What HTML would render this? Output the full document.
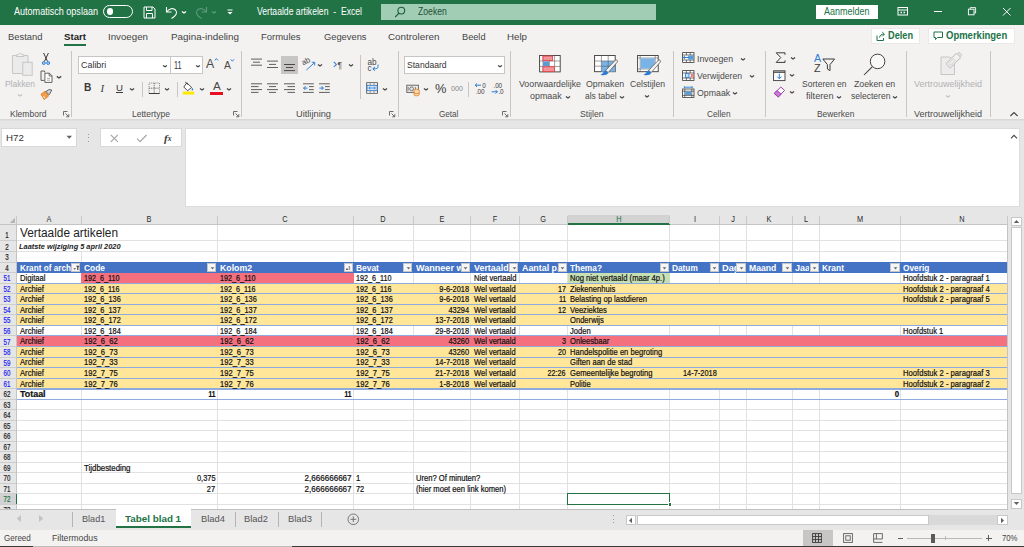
<!DOCTYPE html>
<html lang="nl"><head><meta charset="utf-8"><title>Vertaalde artikelen - Excel</title>
<style>
html,body{margin:0;padding:0;}
body{width:1024px;height:547px;overflow:hidden;background:#e6e6e6;position:relative;font-family:"Liberation Sans", sans-serif;}
.t{position:absolute;white-space:pre;display:block;}
.r{position:absolute;display:block;}
</style></head><body>
<div class="r" style="left:0.00px;top:0.00px;width:1024.00px;height:24.50px;background:#217346;"></div>
<div class="r" style="left:0.00px;top:24.50px;width:1024.00px;height:94.30px;background:#f3f2f1;"></div>
<div class="r" style="left:0.00px;top:118.80px;width:1024.00px;height:2.60px;background:linear-gradient(#d4d4d4,#e4e4e4);"></div>
<span class="t" style="top:4.50px;line-height:14px;font-size:10.2px;color:#fff;left:14.00px;transform:scaleX(0.8882);transform-origin:left center;">Automatisch opslaan</span>
<div class="r" style="left:103.00px;top:5.00px;width:29.50px;height:13.00px;border:1px solid #fff;border-radius:7px;box-sizing:border-box;"></div>
<div class="r" style="left:106.60px;top:8.30px;width:6.60px;height:6.60px;background:#fff;border-radius:3.3px;"></div>
<svg class="r" style="left:143.00px;top:6.00px;" width="13" height="13" viewBox="0 0 13 13"><path d="M1 1 H10 L12 3 V12 H1 Z" fill="none" stroke="#fff" stroke-width="1"/><path d="M3.5 1 V4.5 H9 V1 M3.5 12 V7.5 H9.5 V12" fill="none" stroke="#fff" stroke-width="1"/></svg>
<svg class="r" style="left:165.00px;top:5.00px;" width="14" height="15" viewBox="0 0 14 15"><path d="M1.5 2 V7 H6.5" fill="none" stroke="#fff" stroke-width="1.1"/><path d="M1.8 6.8 C4 3.5 8 2.5 10.5 5 C13 7.8 11 11 6.5 13.5" fill="none" stroke="#fff" stroke-width="1.1"/></svg>
<svg class="r" style="left:180.00px;top:7.50px;" width="8" height="8" viewBox="0 0 8 8"><path d="M1.92 3.40 L4 4.90 L6.08 3.40" fill="none" stroke="#fff" stroke-width="1.2"/></svg>
<svg class="r" style="left:194.00px;top:5.00px;" width="14" height="15" viewBox="0 0 14 15"><path d="M12.5 2 V7 H7.5" fill="none" stroke="#5f9a7c" stroke-width="1.1"/><path d="M12.2 6.8 C10 3.5 6 2.5 3.5 5 C1 7.8 3 11 7.5 13.5" fill="none" stroke="#5f9a7c" stroke-width="1.1"/></svg>
<svg class="r" style="left:210.00px;top:7.50px;" width="8" height="8" viewBox="0 0 8 8"><path d="M1.92 3.40 L4 4.90 L6.08 3.40" fill="none" stroke="#5f9a7c" stroke-width="1.2"/></svg>
<svg class="r" style="left:226.00px;top:8.00px;" width="8" height="8" viewBox="0 0 8 8"><path d="M1.5 2 H6.5" stroke="#fff" stroke-width="1"/><path d="M1.5 4 L4 6.5 L6.5 4 Z" fill="#fff"/></svg>
<span class="t" style="top:4.50px;line-height:14px;font-size:10.2px;color:#fff;left:256.70px;transform:scaleX(0.8467);transform-origin:left center;">Vertaalde artikelen  -  Excel</span>
<div class="r" style="left:380.50px;top:4.00px;width:275.00px;height:16.00px;background:#a0cdb4;"></div>
<svg class="r" style="left:394.00px;top:6.00px;" width="13" height="13" viewBox="0 0 13 13"><circle cx="7.3" cy="4.6" r="3.4" fill="none" stroke="#1e5c3a" stroke-width="1.1"/><path d="M5 7.1 L1.2 11" stroke="#1e5c3a" stroke-width="1.1"/></svg>
<span class="t" style="top:4.80px;line-height:14px;font-size:10.2px;color:#1e4d33;left:417.50px;transform:scaleX(0.8474);transform-origin:left center;">Zoeken</span>
<div class="r" style="left:816.00px;top:4.50px;width:62.00px;height:14.00px;background:#fff;"></div>
<span class="t" style="top:4.60px;line-height:14px;font-size:10.2px;color:#217346;left:824.00px;transform:scaleX(0.8827);transform-origin:left center;">Aanmelden</span>
<svg class="r" style="left:897.00px;top:6.00px;" width="12" height="11" viewBox="0 0 12 11"><rect x="1" y="1.5" width="9.5" height="7.5" fill="none" stroke="#fff" stroke-width="1"/><path d="M1 4 H10.5" stroke="#fff" stroke-width="1"/><path d="M3.5 6.5 H5 M6.5 6.5 H8" stroke="#fff" stroke-width="1.6"/></svg>
<div class="r" style="left:933.50px;top:11.00px;width:8.00px;height:1.00px;background:#fff;"></div>
<svg class="r" style="left:967.00px;top:6.40px;" width="11" height="11" viewBox="0 0 11 11"><rect x="1.4" y="3.2" width="5.6" height="5.6" fill="none" stroke="#fff" stroke-width="0.9"/><path d="M3.2 3.2 V1.6 H8.6 V7 H7" fill="none" stroke="#fff" stroke-width="0.9"/></svg>
<svg class="r" style="left:1002.00px;top:7.00px;" width="10" height="10" viewBox="0 0 10 10"><path d="M1 1 L8.5 8.5 M8.5 1 L1 8.5" stroke="#fff" stroke-width="1"/></svg>
<span class="t" style="top:29.80px;line-height:14px;font-size:9.7px;color:#444;left:7.50px;transform:scaleX(0.9701);transform-origin:left center;">Bestand</span>
<span class="t" style="top:29.80px;line-height:14px;font-size:9.7px;color:#222;font-weight:700;left:64.00px;transform:scaleX(0.9965);transform-origin:left center;">Start</span>
<span class="t" style="top:29.80px;line-height:14px;font-size:9.7px;color:#444;left:107.50px;transform:scaleX(1.0031);transform-origin:left center;">Invoegen</span>
<span class="t" style="top:29.80px;line-height:14px;font-size:9.7px;color:#444;left:170.50px;transform:scaleX(1.018);transform-origin:left center;">Pagina-indeling</span>
<span class="t" style="top:29.80px;line-height:14px;font-size:9.7px;color:#444;left:261.00px;transform:scaleX(0.9783);transform-origin:left center;">Formules</span>
<span class="t" style="top:29.80px;line-height:14px;font-size:9.7px;color:#444;left:323.50px;transform:scaleX(0.9622);transform-origin:left center;">Gegevens</span>
<span class="t" style="top:29.80px;line-height:14px;font-size:9.7px;color:#444;left:388.00px;transform:scaleX(1.0173);transform-origin:left center;">Controleren</span>
<span class="t" style="top:29.80px;line-height:14px;font-size:9.7px;color:#444;left:461.50px;transform:scaleX(0.9483);transform-origin:left center;">Beeld</span>
<span class="t" style="top:29.80px;line-height:14px;font-size:9.7px;color:#444;left:507.00px;transform:scaleX(1.0031);transform-origin:left center;">Help</span>
<div class="r" style="left:64.00px;top:43.80px;width:22.00px;height:1.80px;background:#217346;"></div>
<div class="r" style="left:870.50px;top:28.00px;width:49.50px;height:16.00px;background:#fff;border:1px solid #ebe9e7;box-sizing:border-box;"></div>
<div class="r" style="left:927.50px;top:28.00px;width:87.00px;height:16.00px;background:#fff;border:1px solid #ebe9e7;box-sizing:border-box;"></div>
<span class="t" style="top:29.00px;line-height:14px;font-size:10px;color:#217346;font-weight:700;left:888.20px;transform:scaleX(0.918);transform-origin:left center;">Delen</span>
<span class="t" style="top:29.00px;line-height:14px;font-size:10px;color:#217346;font-weight:700;left:945.50px;transform:scaleX(0.9493);transform-origin:left center;">Opmerkingen</span>
<svg class="r" style="left:876.00px;top:30.50px;" width="10" height="11" viewBox="0 0 10 11"><path d="M1 4.5 V9.5 H7.5 V7" fill="none" stroke="#217346" stroke-width="1"/><path d="M3.5 6.5 C4 4 5.5 3.2 8 3.2 M6.2 1 L8.4 3.2 L6.2 5.4" fill="none" stroke="#217346" stroke-width="1"/></svg>
<svg class="r" style="left:933.00px;top:31.00px;" width="11" height="10" viewBox="0 0 11 10"><path d="M1 1 H9.5 V6.5 H4.5 L2.5 8.5 V6.5 H1 Z" fill="none" stroke="#217346" stroke-width="1"/></svg>
<svg class="r" style="left:11.00px;top:52.00px;" width="23" height="25" viewBox="0 0 23 25"><path d="M1.5 3.5 H17 V21.5 H1.5 Z" fill="#ebebeb" stroke="#c6c6c6" stroke-width="1"/><path d="M5.5 4.5 V2.8 H7.6 C7.8 0.6 10.8 0.6 11 2.8 H13 V4.5 Z" fill="#f3f2f1" stroke="#c6c6c6" stroke-width="1"/><rect x="11.8" y="10.3" width="9.4" height="13" fill="#ebebeb" stroke="#c6c6c6" stroke-width="1"/></svg>
<span class="t" style="top:77.20px;line-height:14px;font-size:9.4px;color:#b1b1b1;left:5.00px;transform:scaleX(0.8993);transform-origin:left center;">Plakken</span>
<svg class="r" style="left:15.80px;top:91.40px;" width="8" height="8" viewBox="0 0 8 8"><path d="M1.92 3.40 L4 4.90 L6.08 3.40" fill="none" stroke="#c2c2c2" stroke-width="1.2"/></svg>
<svg class="r" style="left:41.00px;top:52.00px;" width="10" height="14" viewBox="0 0 10 14"><path d="M2.6 1 L6.6 9.6 M7.4 1 L3.4 9.6" stroke="#3b3a39" stroke-width="1" fill="none"/><circle cx="2.8" cy="11" r="1.5" fill="#9cc8f0" stroke="#2b7cd3" stroke-width="0.9"/><circle cx="7.2" cy="11" r="1.5" fill="#9cc8f0" stroke="#2b7cd3" stroke-width="0.9"/></svg>
<svg class="r" style="left:39.50px;top:70.00px;" width="14" height="14" viewBox="0 0 14 14"><path d="M4.6 2.4 V1 H1 V10.4 H4.4" fill="none" stroke="#4a4846" stroke-width="0.85"/><path d="M4.9 3.2 H9.4 L12 5.8 V12.4 H4.9 Z" fill="#fff" stroke="#4a4846" stroke-width="0.85"/><path d="M9.2 3.2 V6 H12" fill="none" stroke="#4a4846" stroke-width="0.8"/><path d="M7 8.4 H10 M7 10.2 H10" stroke="#8a8886" stroke-width="0.7"/></svg>
<svg class="r" style="left:55.00px;top:72.90px;" width="8" height="8" viewBox="0 0 8 8"><path d="M1.79 3.36 L4 4.94 L6.21 3.36" fill="none" stroke="#444" stroke-width="1.32"/></svg>
<svg class="r" style="left:39.50px;top:88.00px;" width="14" height="13" viewBox="0 0 14 13"><path d="M1 6.2 L5.2 3.2 L8.6 8 L4.2 11.6 Z" fill="#f0a04b" stroke="#e07b25" stroke-width="0.9"/><path d="M3 8.5 L5.2 10.2" stroke="#fff" stroke-width="0.9"/><path d="M6 3.6 L8.8 1.6 L11.8 2 L9.2 6.8 Z" fill="#d8d8d8" stroke="#555" stroke-width="0.9"/></svg>
<span class="t" style="top:106.50px;line-height:14px;font-size:9.3px;color:#4a4a4a;left:9.90px;transform:scaleX(0.9172);transform-origin:left center;">Klembord</span>
<svg class="r" style="left:63.00px;top:110.70px;" width="7" height="7" viewBox="0 0 7 7"><path d="M0.5 4.5 V0.5 H4.5" fill="none" stroke="#605e5c" stroke-width="0.9"/><path d="M2.5 2.5 L5.6 5.6 M5.8 3.2 V5.8 H3.2" fill="none" stroke="#605e5c" stroke-width="0.9"/></svg>
<div class="r" style="left:71.30px;top:50.50px;width:1.00px;height:66.00px;background:#c8c6c4;"></div>
<div class="r" style="left:78.30px;top:56.00px;width:92.50px;height:17.70px;background:#fff;border:1px solid #c8c6c4;box-sizing:border-box;"></div>
<div class="r" style="left:170.20px;top:56.00px;width:32.50px;height:17.70px;background:#fff;border:1px solid #c8c6c4;box-sizing:border-box;"></div>
<span class="t" style="top:58.20px;line-height:14px;font-size:9.9px;color:#333;left:80.70px;transform:scaleX(0.9036);transform-origin:left center;">Calibri</span>
<svg class="r" style="left:161.30px;top:61.60px;" width="8" height="8" viewBox="0 0 8 8"><path d="M2.05 3.44 L4 4.86 L5.95 3.44" fill="none" stroke="#444" stroke-width="1.2"/></svg>
<span class="t" style="top:58.00px;line-height:14px;font-size:10.6px;color:#333;left:173.60px;transform:scaleX(0.6909);transform-origin:left center;">11</span>
<svg class="r" style="left:193.80px;top:61.60px;" width="8" height="8" viewBox="0 0 8 8"><path d="M2.05 3.44 L4 4.86 L5.95 3.44" fill="none" stroke="#444" stroke-width="1.2"/></svg>
<span class="t" style="top:56.80px;line-height:14px;font-size:12.6px;color:#4a4846;left:206.20px;transform:scaleX(0.9755);transform-origin:left center;">A</span>
<svg class="r" style="left:213.90px;top:57.40px;" width="6" height="5" viewBox="0 0 6 5"><path d="M0.8 3.4 L2.4 1.6 L4 3.4" fill="none" stroke="#2b7cd3" stroke-width="1"/></svg>
<span class="t" style="top:57.60px;line-height:14px;font-size:10.8px;color:#4a4846;left:223.80px;transform:scaleX(0.9579);transform-origin:left center;">A</span>
<svg class="r" style="left:229.80px;top:58.00px;" width="6" height="5" viewBox="0 0 6 5"><path d="M0.8 1.4 L2.4 3.2 L4 1.4" fill="none" stroke="#2b7cd3" stroke-width="1"/></svg>
<span class="t" style="top:81.00px;line-height:14px;font-size:10.2px;color:#3b3a39;font-weight:700;left:83.90px;">B</span>
<span class="t" style="top:80.60px;line-height:14px;font-size:10.8px;color:#3b3a39;font-style:italic;left:100.40px;font-family:'Liberation Serif',serif;">I</span>
<span class="t" style="top:81.00px;line-height:14px;font-size:9.6px;color:#3b3a39;left:115.90px;">U</span>
<div class="r" style="left:115.90px;top:92.40px;width:6.80px;height:0.90px;background:#3b3a39;"></div>
<svg class="r" style="left:128.40px;top:84.80px;" width="8" height="8" viewBox="0 0 8 8"><path d="M1.92 3.40 L4 4.90 L6.08 3.40" fill="none" stroke="#444" stroke-width="1.2"/></svg>
<div class="r" style="left:142.00px;top:81.50px;width:1.00px;height:15.00px;background:#c8c6c4;"></div>
<svg class="r" style="left:147.50px;top:82.00px;" width="13" height="13" viewBox="0 0 13 13"><rect x="1" y="1" width="10.5" height="10.5" fill="none" stroke="#8a8886" stroke-width="0.9" stroke-dasharray="1.2 0.9"/><path d="M6.2 1 V11.5 M1 6.2 H11.5" stroke="#605e5c" stroke-width="0.9" stroke-dasharray="1.2 0.9"/><path d="M1 11.5 H11.5" stroke="#3b3a39" stroke-width="1"/></svg>
<svg class="r" style="left:163.20px;top:84.80px;" width="8" height="8" viewBox="0 0 8 8"><path d="M1.92 3.40 L4 4.90 L6.08 3.40" fill="none" stroke="#444" stroke-width="1.2"/></svg>
<div class="r" style="left:176.80px;top:81.50px;width:1.00px;height:15.00px;background:#c8c6c4;"></div>
<svg class="r" style="left:181.90px;top:81.30px;" width="13" height="14" viewBox="0 0 13 14"><path d="M4.8 1.8 L9.6 6.4 L5.6 9.8 L1.8 6 Z" fill="#fff" stroke="#3b3a39" stroke-width="0.9"/><path d="M3.2 1 L6 3.6" stroke="#3b3a39" stroke-width="0.9"/><path d="M10.2 6.8 C11.4 8.4 11.4 9.4 10.4 9.6 C9.4 9.4 9.4 8.4 10.2 6.8 Z" fill="#2b7cd3"/><rect x="0.8" y="10.6" width="11.4" height="3" fill="#ffe900"/></svg>
<svg class="r" style="left:197.60px;top:84.80px;" width="8" height="8" viewBox="0 0 8 8"><path d="M1.92 3.40 L4 4.90 L6.08 3.40" fill="none" stroke="#444" stroke-width="1.2"/></svg>
<span class="t" style="top:78.90px;line-height:14px;font-size:11.2px;color:#4a4846;left:212.60px;transform:scaleX(1.0444);transform-origin:left center;">A</span>
<div class="r" style="left:210.30px;top:91.60px;width:12.50px;height:3.00px;background:#e81123;"></div>
<svg class="r" style="left:225.30px;top:84.80px;" width="8" height="8" viewBox="0 0 8 8"><path d="M1.92 3.40 L4 4.90 L6.08 3.40" fill="none" stroke="#444" stroke-width="1.2"/></svg>
<span class="t" style="top:106.50px;line-height:14px;font-size:9.3px;color:#4a4a4a;left:132.00px;transform:scaleX(0.9188);transform-origin:left center;">Lettertype</span>
<svg class="r" style="left:233.00px;top:110.70px;" width="7" height="7" viewBox="0 0 7 7"><path d="M0.5 4.5 V0.5 H4.5" fill="none" stroke="#605e5c" stroke-width="0.9"/><path d="M2.5 2.5 L5.6 5.6 M5.8 3.2 V5.8 H3.2" fill="none" stroke="#605e5c" stroke-width="0.9"/></svg>
<div class="r" style="left:241.00px;top:50.50px;width:1.00px;height:66.00px;background:#c8c6c4;"></div>
<svg class="r" style="left:250.90px;top:56.00px;" width="11" height="16" viewBox="0 0 11 16"><path d="M0 3.1 H11" stroke="#605e5c" stroke-width="1"/><path d="M2 6.2 H9" stroke="#605e5c" stroke-width="1"/><path d="M0 9.2 H11" stroke="#605e5c" stroke-width="1"/></svg>
<svg class="r" style="left:267.20px;top:56.00px;" width="11" height="16" viewBox="0 0 11 16"><path d="M0 5.1 H11" stroke="#605e5c" stroke-width="1"/><path d="M2 8.4 H9" stroke="#605e5c" stroke-width="1"/><path d="M0 11.5 H11" stroke="#605e5c" stroke-width="1"/></svg>
<div class="r" style="left:281.00px;top:56.40px;width:16.60px;height:17.20px;background:#c8c6c4;"></div>
<svg class="r" style="left:283.90px;top:56.00px;" width="11" height="16" viewBox="0 0 11 16"><path d="M0 8.5 H11" stroke="#4a4846" stroke-width="1"/><path d="M2 11.5 H9" stroke="#4a4846" stroke-width="1"/><path d="M0 14.6 H11" stroke="#4a4846" stroke-width="1"/></svg>
<svg class="r" style="left:301.50px;top:57.50px;" width="14" height="14" viewBox="0 0 14 14"><text x="0" y="0" font-family="Liberation Sans, sans-serif" font-size="7.8" fill="#4a4846" transform="translate(1.2 7.6) rotate(-28)">ab</text><path d="M4.4 12 L12.6 4.6 M9.8 4.2 L12.8 4.4 L12.6 7.4" fill="none" stroke="#2b7cd3" stroke-width="0.95"/></svg>
<svg class="r" style="left:315.90px;top:61.10px;" width="8" height="8" viewBox="0 0 8 8"><path d="M1.92 3.40 L4 4.90 L6.08 3.40" fill="none" stroke="#444" stroke-width="1.2"/></svg>
<svg class="r" style="left:332.50px;top:60.00px;" width="6" height="9" viewBox="0 0 6 9"><path d="M0.8 1.8 L3.4 4.4 L0.8 7" fill="none" stroke="#2b7cd3" stroke-width="1.05"/></svg>
<span class="t" style="top:57.60px;line-height:14px;font-size:8.4px;color:#4a4846;left:337.40px;">¶</span>
<svg class="r" style="left:346.60px;top:61.10px;" width="8" height="8" viewBox="0 0 8 8"><path d="M1.92 3.40 L4 4.90 L6.08 3.40" fill="none" stroke="#444" stroke-width="1.2"/></svg>
<div class="r" style="left:360.00px;top:54.60px;width:1.00px;height:44.20px;background:#c8c6c4;"></div>
<svg class="r" style="left:367.00px;top:57.50px;" width="13" height="14" viewBox="0 0 13 14"><text x="0.5" y="7.2" font-family="Liberation Sans, sans-serif" font-size="8.2" fill="#4a4846">ab</text><text x="0.5" y="12.8" font-family="Liberation Sans, sans-serif" font-size="8.2" fill="#4a4846">c</text><path d="M11 6.6 V8.6 C11 10.6 9.6 10.8 6 10.8 M8 8.8 L5.8 10.8 L8 12.8" fill="none" stroke="#2b7cd3" stroke-width="1"/></svg>
<svg class="r" style="left:250.90px;top:81.00px;" width="11" height="14" viewBox="0 0 11 14"><path d="M0 2.8 H11" stroke="#605e5c" stroke-width="1"/><path d="M0 5.6 H7.5" stroke="#605e5c" stroke-width="1"/><path d="M0 8.6 H11" stroke="#605e5c" stroke-width="1"/><path d="M0 11.4 H7.5" stroke="#605e5c" stroke-width="1"/></svg>
<svg class="r" style="left:267.20px;top:81.00px;" width="11" height="14" viewBox="0 0 11 14"><path d="M0 2.8 H11" stroke="#605e5c" stroke-width="1"/><path d="M2 5.6 H9" stroke="#605e5c" stroke-width="1"/><path d="M0 8.6 H11" stroke="#605e5c" stroke-width="1"/><path d="M2 11.4 H9" stroke="#605e5c" stroke-width="1"/></svg>
<svg class="r" style="left:283.90px;top:81.00px;" width="11" height="14" viewBox="0 0 11 14"><path d="M0 2.8 H11" stroke="#605e5c" stroke-width="1"/><path d="M3.5 5.6 H11" stroke="#605e5c" stroke-width="1"/><path d="M0 8.6 H11" stroke="#605e5c" stroke-width="1"/><path d="M3.5 11.4 H11" stroke="#605e5c" stroke-width="1"/></svg>
<svg class="r" style="left:303.10px;top:81.00px;" width="11" height="14" viewBox="0 0 11 14"><path d="M0 2.8 H10.8" stroke="#605e5c" stroke-width="1"/><path d="M6 5.6 H10.8" stroke="#605e5c" stroke-width="1"/><path d="M6 8.6 H10.8" stroke="#605e5c" stroke-width="1"/><path d="M0 11.4 H10.8" stroke="#605e5c" stroke-width="1"/><path d="M0.6 7.1 H4.6 M2.4 5.2 L0.6 7.1 L2.4 9" fill="none" stroke="#2b7cd3" stroke-width="1"/></svg>
<svg class="r" style="left:319.40px;top:81.00px;" width="11" height="14" viewBox="0 0 11 14"><path d="M0 2.8 H10.8" stroke="#605e5c" stroke-width="1"/><path d="M6 5.6 H10.8" stroke="#605e5c" stroke-width="1"/><path d="M6 8.6 H10.8" stroke="#605e5c" stroke-width="1"/><path d="M0 11.4 H10.8" stroke="#605e5c" stroke-width="1"/><path d="M0.4 7.1 H4.4 M2.6 5.2 L4.4 7.1 L2.6 9" fill="none" stroke="#2b7cd3" stroke-width="1"/></svg>
<svg class="r" style="left:366.00px;top:82.00px;" width="13" height="13" viewBox="0 0 13 13"><rect x="0.7" y="0.7" width="10.8" height="10.6" fill="#fff" stroke="#4a4846" stroke-width="0.8"/><path d="M0.7 3.2 H11.5 M0.7 8.8 H11.5 M4.2 0.7 V3.2 M8 0.7 V3.2 M4.2 8.8 V11.3 M8 8.8 V11.3" stroke="#605e5c" stroke-width="0.6"/><rect x="1.1" y="3.5" width="10" height="5" fill="#d6e8f8" stroke="#2b7cd3" stroke-width="0.7"/><path d="M2.8 6 H9.4 M4.2 4.7 L2.8 6 L4.2 7.3 M8 4.7 L9.4 6 L8 7.3" fill="none" stroke="#2b7cd3" stroke-width="0.8"/></svg>
<svg class="r" style="left:381.20px;top:85.00px;" width="8" height="8" viewBox="0 0 8 8"><path d="M1.92 3.40 L4 4.90 L6.08 3.40" fill="none" stroke="#444" stroke-width="1.2"/></svg>
<span class="t" style="top:106.50px;line-height:14px;font-size:9.3px;color:#4a4a4a;left:296.00px;transform:scaleX(0.996);transform-origin:left center;">Uitlijning</span>
<svg class="r" style="left:388.80px;top:110.70px;" width="7" height="7" viewBox="0 0 7 7"><path d="M0.5 4.5 V0.5 H4.5" fill="none" stroke="#605e5c" stroke-width="0.9"/><path d="M2.5 2.5 L5.6 5.6 M5.8 3.2 V5.8 H3.2" fill="none" stroke="#605e5c" stroke-width="0.9"/></svg>
<div class="r" style="left:397.50px;top:50.50px;width:1.00px;height:66.00px;background:#c8c6c4;"></div>
<div class="r" style="left:404.40px;top:56.20px;width:100.40px;height:17.50px;background:#fff;border:1px solid #c8c6c4;box-sizing:border-box;"></div>
<span class="t" style="top:58.20px;line-height:14px;font-size:9.9px;color:#333;left:406.90px;transform:scaleX(0.8688);transform-origin:left center;">Standaard</span>
<svg class="r" style="left:495.80px;top:61.60px;" width="8" height="8" viewBox="0 0 8 8"><path d="M2.05 3.44 L4 4.86 L5.95 3.44" fill="none" stroke="#444" stroke-width="1.2"/></svg>
<svg class="r" style="left:405.90px;top:83.90px;" width="15" height="13" viewBox="0 0 15 13"><rect x="0.8" y="1.2" width="11.6" height="7.2" fill="#e8e8e8" stroke="#605e5c" stroke-width="0.9"/><circle cx="5.6" cy="4.8" r="1.9" fill="none" stroke="#605e5c" stroke-width="0.8"/><path d="M2.2 3 V6.6 M9.4 3 V6.6" stroke="#605e5c" stroke-width="0.7"/><ellipse cx="10.6" cy="6.4" rx="2.6" ry="1.1" fill="#fbd9a8" stroke="#e07b25" stroke-width="0.8"/><path d="M8 6.4 V10.8 C8 12.2 13.2 12.2 13.2 10.8 V6.4 M8 8.6 C8 10 13.2 10 13.2 8.6" fill="#fbd9a8" stroke="#e07b25" stroke-width="0.8"/></svg>
<svg class="r" style="left:422.00px;top:85.00px;" width="8" height="8" viewBox="0 0 8 8"><path d="M1.92 3.40 L4 4.90 L6.08 3.40" fill="none" stroke="#444" stroke-width="1.2"/></svg>
<span class="t" style="top:81.60px;line-height:14px;font-size:13.4px;color:#3b3a39;left:434.60px;transform:scaleX(0.9562);transform-origin:left center;">%</span>
<span class="t" style="top:81.60px;line-height:14px;font-size:7.6px;color:#8a8886;left:450.70px;transform:scaleX(0.947);transform-origin:left center;">000</span>
<div class="r" style="left:468.10px;top:81.50px;width:1.00px;height:15.00px;background:#c8c6c4;"></div>
<svg class="r" style="left:473.50px;top:82.00px;" width="14" height="13" viewBox="0 0 14 13"><path d="M1.2 3.2 H7 M3 1.4 L1.2 3.2 L3 5" fill="none" stroke="#2b7cd3" stroke-width="1"/><text x="8.2" y="5.8" font-family="Liberation Sans, sans-serif" font-size="6.4" fill="#3b3a39">0</text><text x="2" y="12.2" font-family="Liberation Sans, sans-serif" font-size="6.4" letter-spacing="-0.2" fill="#3b3a39">.00</text></svg>
<svg class="r" style="left:490.80px;top:82.00px;" width="14" height="13" viewBox="0 0 14 13"><text x="2.6" y="5.8" font-family="Liberation Sans, sans-serif" font-size="6.4" letter-spacing="-0.2" fill="#3b3a39">.00</text><path d="M0.6 9.8 H6.4 M4.6 8 L6.4 9.8 L4.6 11.6" fill="none" stroke="#2b7cd3" stroke-width="1"/><text x="7.4" y="12.2" font-family="Liberation Sans, sans-serif" font-size="6.4" letter-spacing="-0.2" fill="#3b3a39">.0</text></svg>
<span class="t" style="top:106.50px;line-height:14px;font-size:9.3px;color:#4a4a4a;left:438.80px;transform:scaleX(0.8725);transform-origin:left center;">Getal</span>
<svg class="r" style="left:501.80px;top:110.70px;" width="7" height="7" viewBox="0 0 7 7"><path d="M0.5 4.5 V0.5 H4.5" fill="none" stroke="#605e5c" stroke-width="0.9"/><path d="M2.5 2.5 L5.6 5.6 M5.8 3.2 V5.8 H3.2" fill="none" stroke="#605e5c" stroke-width="0.9"/></svg>
<div class="r" style="left:510.30px;top:50.50px;width:1.00px;height:66.00px;background:#c8c6c4;"></div>
<svg class="r" style="left:539.40px;top:55.00px;" width="22" height="18" viewBox="0 0 22 18"><rect x="0.6" y="0.5" width="20.6" height="16.4" fill="#fff" stroke="#3b3a39" stroke-width="0.9"/><path d="M4 0.5 V16.9 M10.4 0.5 V16.9 M15.6 0.5 V16.9 M0.6 6 H21.2 M0.6 11.4 H21.2" stroke="#605e5c" stroke-width="0.6"/><rect x="4" y="1" width="9.6" height="4.6" fill="#f1959b" stroke="#e8414b" stroke-width="0.9"/><rect x="4" y="6.4" width="6" height="4.6" fill="#5b9bd5"/><rect x="4" y="11.8" width="11.4" height="4.8" fill="#f1959b" stroke="#e8414b" stroke-width="0.9"/></svg>
<span class="t" style="top:77.10px;line-height:14px;font-size:9.4px;color:#4a4a4a;left:518.90px;transform:scaleX(0.9367);transform-origin:left center;">Voorwaardelijke</span>
<span class="t" style="top:89.10px;line-height:14px;font-size:9.4px;color:#4a4a4a;left:530.40px;transform:scaleX(0.9473);transform-origin:left center;">opmaak</span>
<svg class="r" style="left:563.50px;top:93.00px;" width="8" height="8" viewBox="0 0 8 8"><path d="M1.92 3.40 L4 4.90 L6.08 3.40" fill="none" stroke="#444" stroke-width="1.2"/></svg>
<svg class="r" style="left:594.40px;top:55.00px;" width="25" height="21" viewBox="0 0 25 21"><rect x="0.6" y="0.5" width="20.6" height="16.2" fill="#fff" stroke="#3b3a39" stroke-width="0.9"/><rect x="7.4" y="6" width="13.6" height="10.6" fill="#7ab3e6"/><path d="M7.4 0.5 V16.7 M14.2 0.5 V16.7 M0.6 6 H21.2 M0.6 11.2 H21.2" stroke="#605e5c" stroke-width="0.6"/><path d="M21.4 5.2 C22.8 4.4 24.2 5.8 23.2 7.2 L14.2 17.6 L11.6 15.4 Z" fill="#f3f2f1" stroke="#605e5c" stroke-width="0.8"/><path d="M11.4 15.2 L14.2 17.8 C13.2 20.4 9.2 20.8 6.4 19.8 C9 19 9.4 16.4 11.4 15.2 Z" fill="#2b7cd3"/></svg>
<span class="t" style="top:77.10px;line-height:14px;font-size:9.4px;color:#4a4a4a;left:586.20px;transform:scaleX(0.9396);transform-origin:left center;">Opmaken</span>
<span class="t" style="top:89.10px;line-height:14px;font-size:9.4px;color:#4a4a4a;left:585.30px;transform:scaleX(0.9077);transform-origin:left center;">als tabel</span>
<svg class="r" style="left:618.30px;top:93.00px;" width="8" height="8" viewBox="0 0 8 8"><path d="M1.92 3.40 L4 4.90 L6.08 3.40" fill="none" stroke="#444" stroke-width="1.2"/></svg>
<svg class="r" style="left:636.60px;top:55.00px;" width="25" height="21" viewBox="0 0 25 21"><rect x="0.6" y="0.5" width="20.6" height="16.2" fill="#fff" stroke="#3b3a39" stroke-width="0.9"/><path d="M3.2 0.5 V16.7 M18.2 0.5 V12 M0.6 3 H21.2 M0.6 14 H14" stroke="#605e5c" stroke-width="0.6"/><rect x="3.6" y="3.4" width="14.2" height="10.2" fill="#7ab3e6"/><path d="M21.4 5.2 C22.8 4.4 24.2 5.8 23.2 7.2 L14.2 17.6 L11.6 15.4 Z" fill="#f3f2f1" stroke="#605e5c" stroke-width="0.8"/><path d="M11.4 15.2 L14.2 17.8 C13.2 20.4 9.2 20.8 6.4 19.8 C9 19 9.4 16.4 11.4 15.2 Z" fill="#2b7cd3"/></svg>
<span class="t" style="top:77.10px;line-height:14px;font-size:9.4px;color:#4a4a4a;left:629.80px;transform:scaleX(0.9225);transform-origin:left center;">Celstijlen</span>
<svg class="r" style="left:642.50px;top:92.40px;" width="8" height="8" viewBox="0 0 8 8"><path d="M1.92 3.40 L4 4.90 L6.08 3.40" fill="none" stroke="#444" stroke-width="1.2"/></svg>
<span class="t" style="top:106.50px;line-height:14px;font-size:9.3px;color:#4a4a4a;left:579.80px;transform:scaleX(0.9318);transform-origin:left center;">Stijlen</span>
<div class="r" style="left:673.00px;top:50.50px;width:1.00px;height:66.00px;background:#c8c6c4;"></div>
<svg class="r" style="left:681.50px;top:52.40px;" width="13" height="11" viewBox="0 0 13 11"><rect x="0.6" y="0.6" width="11.4" height="9.8" fill="#fff" stroke="#3b3a39" stroke-width="0.8"/><path d="M0.6 3 H12 M0.6 8 H12 M4.4 0.6 V3 M8.2 0.6 V3 M4.4 8 V10.4 M8.2 8 V10.4" stroke="#3b3a39" stroke-width="0.7"/><rect x="6.2" y="3.4" width="5.6" height="4.2" fill="#5b9bd5"/><path d="M1.2 5.5 H7 M3 3.8 L1.2 5.5 L3 7.2" fill="none" stroke="#2b7cd3" stroke-width="1"/></svg>
<span class="t" style="top:51.70px;line-height:14px;font-size:9.4px;color:#4a4a4a;left:696.60px;transform:scaleX(0.9358);transform-origin:left center;">Invoegen</span>
<svg class="r" style="left:738.90px;top:54.60px;" width="8" height="8" viewBox="0 0 8 8"><path d="M1.92 3.40 L4 4.90 L6.08 3.40" fill="none" stroke="#444" stroke-width="1.2"/></svg>
<svg class="r" style="left:681.50px;top:69.60px;" width="13" height="11" viewBox="0 0 13 11"><rect x="0.6" y="0.6" width="11.4" height="9.8" fill="#fff" stroke="#3b3a39" stroke-width="0.8"/><path d="M0.6 3 H12 M0.6 8 H12 M4.4 0.6 V3 M8.2 0.6 V3 M4.4 8 V10.4 M8.2 8 V10.4" stroke="#3b3a39" stroke-width="0.7"/><rect x="3.4" y="3.6" width="3.6" height="3.8" fill="#cfe4f7" stroke="#2b7cd3" stroke-width="0.9"/><path d="M8.4 3.6 L11.8 7.4 M11.8 3.6 L8.4 7.4" stroke="#e8414b" stroke-width="1"/></svg>
<span class="t" style="top:68.60px;line-height:14px;font-size:9.4px;color:#4a4a4a;left:696.60px;transform:scaleX(0.9204);transform-origin:left center;">Verwijderen</span>
<svg class="r" style="left:748.10px;top:71.60px;" width="8" height="8" viewBox="0 0 8 8"><path d="M1.92 3.40 L4 4.90 L6.08 3.40" fill="none" stroke="#444" stroke-width="1.2"/></svg>
<svg class="r" style="left:681.50px;top:86.20px;" width="13" height="12" viewBox="0 0 13 12"><path d="M2.4 1.2 H10.2 M2.4 0.2 V2.2 M10.2 0.2 V2.2" stroke="#2b7cd3" stroke-width="0.9"/><rect x="0.6" y="3" width="11.4" height="8.4" fill="#fff" stroke="#3b3a39" stroke-width="0.8"/><path d="M2.8 3 V11.4 M9.8 3 V11.4 M0.6 5.2 H12 M0.6 9.4 H12" stroke="#3b3a39" stroke-width="0.7"/><rect x="3.2" y="5.6" width="6.2" height="3.4" fill="#5b9bd5"/></svg>
<span class="t" style="top:85.60px;line-height:14px;font-size:9.4px;color:#4a4a4a;left:696.60px;transform:scaleX(0.9369);transform-origin:left center;">Opmaak</span>
<svg class="r" style="left:731.20px;top:89.00px;" width="8" height="8" viewBox="0 0 8 8"><path d="M1.92 3.40 L4 4.90 L6.08 3.40" fill="none" stroke="#444" stroke-width="1.2"/></svg>
<span class="t" style="top:106.50px;line-height:14px;font-size:9.3px;color:#4a4a4a;left:707.00px;transform:scaleX(0.8915);transform-origin:left center;">Cellen</span>
<div class="r" style="left:764.50px;top:50.50px;width:1.00px;height:66.00px;background:#c8c6c4;"></div>
<svg class="r" style="left:774.50px;top:52.40px;" width="12" height="12" viewBox="0 0 12 12"><path d="M10 2.8 V0.8 H1.2 L5.8 5.6 L1.2 10.4 H10 V8.4" fill="none" stroke="#3b3a39" stroke-width="1"/></svg>
<svg class="r" style="left:788.60px;top:54.40px;" width="8" height="8" viewBox="0 0 8 8"><path d="M1.92 3.40 L4 4.90 L6.08 3.40" fill="none" stroke="#444" stroke-width="1.2"/></svg>
<svg class="r" style="left:773.40px;top:70.00px;" width="13" height="12" viewBox="0 0 13 12"><rect x="0.6" y="0.8" width="11.4" height="9.8" fill="#fff" stroke="#3b3a39" stroke-width="0.9"/><path d="M0.6 2.2 H12" stroke="#3b3a39" stroke-width="1.2"/><path d="M6.3 3.6 V8.6 M4.2 6.6 L6.3 8.8 L8.4 6.6" fill="none" stroke="#2b7cd3" stroke-width="1"/></svg>
<svg class="r" style="left:787.60px;top:71.20px;" width="8" height="8" viewBox="0 0 8 8"><path d="M1.92 3.40 L4 4.90 L6.08 3.40" fill="none" stroke="#444" stroke-width="1.2"/></svg>
<svg class="r" style="left:773.40px;top:86.20px;" width="13" height="12" viewBox="0 0 13 12"><path d="M7.8 1 L11.6 4.4 L5.2 11 L1.2 7.4 Z" fill="#fff" stroke="#a33bb5" stroke-width="1"/><path d="M4.2 4.6 L8.2 8.2 L5.2 11 L1.2 7.4 Z" fill="#c77ad4" stroke="#a33bb5" stroke-width="0.9"/></svg>
<svg class="r" style="left:787.60px;top:88.20px;" width="8" height="8" viewBox="0 0 8 8"><path d="M1.92 3.40 L4 4.90 L6.08 3.40" fill="none" stroke="#444" stroke-width="1.2"/></svg>
<span class="t" style="top:51.60px;line-height:14px;font-size:10.4px;color:#2b7cd3;left:813.60px;transform:scaleX(1.0378);transform-origin:left center;">A</span>
<span class="t" style="top:62.40px;line-height:14px;font-size:10.4px;color:#3b3a39;left:813.80px;transform:scaleX(1.0378);transform-origin:left center;">Z</span>
<svg class="r" style="left:821.50px;top:58.00px;" width="14" height="14" viewBox="0 0 14 14"><path d="M0.8 1 H12.6 L8 6.6 V12.6 L5.4 11 V6.6 Z" fill="none" stroke="#3b3a39" stroke-width="1"/></svg>
<span class="t" style="top:76.90px;line-height:14px;font-size:9.4px;color:#4a4a4a;left:801.80px;transform:scaleX(0.9102);transform-origin:left center;">Sorteren en</span>
<span class="t" style="top:89.10px;line-height:14px;font-size:9.4px;color:#4a4a4a;left:805.90px;transform:scaleX(0.9772);transform-origin:left center;">filteren</span>
<svg class="r" style="left:834.50px;top:93.00px;" width="8" height="8" viewBox="0 0 8 8"><path d="M1.92 3.40 L4 4.90 L6.08 3.40" fill="none" stroke="#444" stroke-width="1.2"/></svg>
<svg class="r" style="left:862.50px;top:52.50px;" width="24" height="23" viewBox="0 0 24 23"><circle cx="14.6" cy="8.4" r="7.3" fill="#f9f9f9" stroke="#3b3a39" stroke-width="0.95"/><path d="M9.4 13.6 L1 22" stroke="#3b3a39" stroke-width="1.05"/></svg>
<span class="t" style="top:76.90px;line-height:14px;font-size:9.4px;color:#4a4a4a;left:854.10px;transform:scaleX(0.9298);transform-origin:left center;">Zoeken en</span>
<span class="t" style="top:89.10px;line-height:14px;font-size:9.4px;color:#4a4a4a;left:850.70px;transform:scaleX(0.913);transform-origin:left center;">selecteren</span>
<svg class="r" style="left:890.80px;top:93.00px;" width="8" height="8" viewBox="0 0 8 8"><path d="M1.92 3.40 L4 4.90 L6.08 3.40" fill="none" stroke="#444" stroke-width="1.2"/></svg>
<span class="t" style="top:106.50px;line-height:14px;font-size:9.3px;color:#4a4a4a;left:816.70px;transform:scaleX(0.9046);transform-origin:left center;">Bewerken</span>
<div class="r" style="left:905.90px;top:50.50px;width:1.00px;height:66.00px;background:#c8c6c4;"></div>
<svg class="r" style="left:938.50px;top:51.50px;" width="24" height="24" viewBox="0 0 24 24"><path d="M2 5 H11 L15.5 9.5 V22.5 H2 Z" fill="#ececec" stroke="#c6c6c6" stroke-width="1"/><g transform="rotate(-45 14 9)"><rect x="7" y="6" width="15" height="6" rx="1" fill="#f3f2f1" stroke="#c6c6c6" stroke-width="1"/><rect x="9" y="7.8" width="7" height="2.4" fill="none" stroke="#c6c6c6" stroke-width="0.8"/><rect x="22" y="7" width="2.6" height="4" fill="#e0e0e0" stroke="#c6c6c6" stroke-width="0.8"/></g></svg>
<span class="t" style="top:76.90px;line-height:14px;font-size:9.4px;color:#b1b1b1;left:914.20px;transform:scaleX(0.9594);transform-origin:left center;">Vertrouwelijkheid</span>
<svg class="r" style="left:944.20px;top:92.40px;" width="8" height="8" viewBox="0 0 8 8"><path d="M1.92 3.40 L4 4.90 L6.08 3.40" fill="none" stroke="#c2c2c2" stroke-width="1.2"/></svg>
<span class="t" style="top:106.50px;line-height:14px;font-size:9.3px;color:#4a4a4a;left:914.20px;transform:scaleX(0.9675);transform-origin:left center;">Vertrouwelijkheid</span>
<div class="r" style="left:989.70px;top:50.50px;width:1.00px;height:66.00px;background:#c8c6c4;"></div>
<svg class="r" style="left:1009.00px;top:111.00px;" width="10" height="7" viewBox="0 0 10 7"><path d="M1.4 5 L5 1.6 L8.6 5" fill="none" stroke="#444" stroke-width="1.1"/></svg>
<div class="r" style="left:1.20px;top:128.00px;width:76.00px;height:19.00px;background:#fff;border:1px solid #d8d8d8;box-sizing:border-box;"></div>
<span class="t" style="top:131.00px;line-height:14px;font-size:9.8px;color:#333;left:6.00px;transform:scaleX(0.9897);transform-origin:left center;">H72</span>
<svg class="r" style="left:66.00px;top:135.00px;" width="7" height="5" viewBox="0 0 7 5"><path d="M0.6 0.8 H6 L3.3 3.8 Z" fill="#605e5c"/></svg>
<div class="r" style="left:87.60px;top:133.60px;width:1.00px;height:1.00px;background:#9a9a9a;"></div>
<div class="r" style="left:87.60px;top:137.20px;width:1.00px;height:1.00px;background:#9a9a9a;"></div>
<div class="r" style="left:87.60px;top:140.80px;width:1.00px;height:1.00px;background:#9a9a9a;"></div>
<div class="r" style="left:100.00px;top:128.00px;width:82.40px;height:19.00px;background:#fff;border:1px solid #d8d8d8;box-sizing:border-box;"></div>
<svg class="r" style="left:110.00px;top:133.60px;" width="9" height="9" viewBox="0 0 9 9"><path d="M0.8 0.8 L7.8 7.8 M7.8 0.8 L0.8 7.8" stroke="#a6a6a6" stroke-width="1.2"/></svg>
<svg class="r" style="left:136.00px;top:133.60px;" width="12" height="9" viewBox="0 0 12 9"><path d="M1 4.6 L4 7.6 L10.6 1" fill="none" stroke="#a6a6a6" stroke-width="1.2"/></svg>
<span class="t" style="top:130.60px;line-height:14px;font-size:11px;color:#3b3a39;font-weight:700;font-style:italic;left:164.10px;font-family:'Liberation Serif',serif;">f</span>
<span class="t" style="top:132.40px;line-height:14px;font-size:7.4px;color:#3b3a39;font-weight:700;font-style:italic;left:167.80px;font-family:'Liberation Serif',serif;">x</span>
<div class="r" style="left:185.00px;top:128.00px;width:834.60px;height:78.60px;background:#fff;border:1px solid #dcdcdc;box-sizing:border-box;"></div>
<svg class="r" style="left:1010.00px;top:134.00px;" width="8" height="6" viewBox="0 0 8 6"><path d="M1 4.4 L4 1.4 L7 4.4" fill="none" stroke="#444" stroke-width="1.1"/></svg>
<div class="r" style="left:17.00px;top:224.50px;width:990.60px;height:284.50px;background:#fff;"></div>
<div class="r" style="left:0.00px;top:214.00px;width:1008.00px;height:10.50px;background:#e6e6e6;"></div>
<div class="r" style="left:0.00px;top:224.00px;width:1008.00px;height:0.80px;background:#c4c4c4;"></div>
<div class="r" style="left:567.70px;top:215.00px;width:102.00px;height:9.00px;background:#d2d2d2;"></div>
<div class="r" style="left:567.70px;top:223.00px;width:102.00px;height:1.50px;background:#217346;"></div>
<span class="t" style="top:212.30px;line-height:14px;font-size:8.4px;color:#2a2a2a;left:-50.90px;width:200px;text-align:center;transform:scaleX(0.88);transform-origin:center center;">A</span>
<div class="r" style="left:80.70px;top:215.50px;width:1.00px;height:8.50px;background:#c9c9c9;"></div>
<span class="t" style="top:212.30px;line-height:14px;font-size:8.4px;color:#2a2a2a;left:49.20px;width:200px;text-align:center;transform:scaleX(0.88);transform-origin:center center;">B</span>
<div class="r" style="left:216.70px;top:215.50px;width:1.00px;height:8.50px;background:#c9c9c9;"></div>
<span class="t" style="top:212.30px;line-height:14px;font-size:8.4px;color:#2a2a2a;left:185.40px;width:200px;text-align:center;transform:scaleX(0.88);transform-origin:center center;">C</span>
<div class="r" style="left:353.10px;top:215.50px;width:1.00px;height:8.50px;background:#c9c9c9;"></div>
<span class="t" style="top:212.30px;line-height:14px;font-size:8.4px;color:#2a2a2a;left:283.40px;width:200px;text-align:center;transform:scaleX(0.88);transform-origin:center center;">D</span>
<div class="r" style="left:412.70px;top:215.50px;width:1.00px;height:8.50px;background:#c9c9c9;"></div>
<span class="t" style="top:212.30px;line-height:14px;font-size:8.4px;color:#2a2a2a;left:342.05px;width:200px;text-align:center;transform:scaleX(0.88);transform-origin:center center;">E</span>
<div class="r" style="left:470.40px;top:215.50px;width:1.00px;height:8.50px;background:#c9c9c9;"></div>
<span class="t" style="top:212.30px;line-height:14px;font-size:8.4px;color:#2a2a2a;left:395.05px;width:200px;text-align:center;transform:scaleX(0.88);transform-origin:center center;">F</span>
<div class="r" style="left:518.70px;top:215.50px;width:1.00px;height:8.50px;background:#c9c9c9;"></div>
<span class="t" style="top:212.30px;line-height:14px;font-size:8.4px;color:#2a2a2a;left:443.45px;width:200px;text-align:center;transform:scaleX(0.88);transform-origin:center center;">G</span>
<div class="r" style="left:567.20px;top:215.50px;width:1.00px;height:8.50px;background:#c9c9c9;"></div>
<span class="t" style="top:212.30px;line-height:14px;font-size:8.4px;color:#217346;left:518.70px;width:200px;text-align:center;transform:scaleX(0.88);transform-origin:center center;">H</span>
<div class="r" style="left:669.20px;top:215.50px;width:1.00px;height:8.50px;background:#c9c9c9;"></div>
<span class="t" style="top:212.30px;line-height:14px;font-size:8.4px;color:#2a2a2a;left:594.70px;width:200px;text-align:center;transform:scaleX(0.88);transform-origin:center center;">I</span>
<div class="r" style="left:719.20px;top:215.50px;width:1.00px;height:8.50px;background:#c9c9c9;"></div>
<span class="t" style="top:212.30px;line-height:14px;font-size:8.4px;color:#2a2a2a;left:633.05px;width:200px;text-align:center;transform:scaleX(0.88);transform-origin:center center;">J</span>
<div class="r" style="left:745.90px;top:215.50px;width:1.00px;height:8.50px;background:#c9c9c9;"></div>
<span class="t" style="top:212.30px;line-height:14px;font-size:8.4px;color:#2a2a2a;left:669.45px;width:200px;text-align:center;transform:scaleX(0.88);transform-origin:center center;">K</span>
<div class="r" style="left:792.00px;top:215.50px;width:1.00px;height:8.50px;background:#c9c9c9;"></div>
<span class="t" style="top:212.30px;line-height:14px;font-size:8.4px;color:#2a2a2a;left:706.05px;width:200px;text-align:center;transform:scaleX(0.88);transform-origin:center center;">L</span>
<div class="r" style="left:819.10px;top:215.50px;width:1.00px;height:8.50px;background:#c9c9c9;"></div>
<span class="t" style="top:212.30px;line-height:14px;font-size:8.4px;color:#2a2a2a;left:760.00px;width:200px;text-align:center;transform:scaleX(0.88);transform-origin:center center;">M</span>
<div class="r" style="left:899.90px;top:215.50px;width:1.00px;height:8.50px;background:#c9c9c9;"></div>
<span class="t" style="top:212.30px;line-height:14px;font-size:8.4px;color:#2a2a2a;left:862.20px;width:200px;text-align:center;transform:scaleX(0.88);transform-origin:center center;">N</span>
<div class="r" style="left:1007.10px;top:215.50px;width:1.00px;height:8.50px;background:#c9c9c9;"></div>
<div class="r" style="left:16.30px;top:215.50px;width:1.00px;height:8.50px;background:#c9c9c9;"></div>
<svg class="r" style="left:9.00px;top:217.00px;" width="7" height="7" viewBox="0 0 7 7"><path d="M6 0.8 V6 H0.8 Z" fill="#b5b5b5"/></svg>
<div class="r" style="left:0.00px;top:224.50px;width:16.60px;height:284.50px;background:#e6e6e6;"></div>
<div class="r" style="left:16.30px;top:224.50px;width:0.90px;height:284.50px;background:#c4c4c4;"></div>
<div class="r" style="left:80.70px;top:224.50px;width:1.00px;height:284.50px;background:#e1e1e1;"></div>
<div class="r" style="left:216.70px;top:224.50px;width:1.00px;height:284.50px;background:#e1e1e1;"></div>
<div class="r" style="left:353.10px;top:224.50px;width:1.00px;height:284.50px;background:#e1e1e1;"></div>
<div class="r" style="left:412.70px;top:224.50px;width:1.00px;height:284.50px;background:#e1e1e1;"></div>
<div class="r" style="left:470.40px;top:224.50px;width:1.00px;height:284.50px;background:#e1e1e1;"></div>
<div class="r" style="left:518.70px;top:224.50px;width:1.00px;height:284.50px;background:#e1e1e1;"></div>
<div class="r" style="left:567.20px;top:224.50px;width:1.00px;height:284.50px;background:#e1e1e1;"></div>
<div class="r" style="left:669.20px;top:224.50px;width:1.00px;height:284.50px;background:#e1e1e1;"></div>
<div class="r" style="left:719.20px;top:224.50px;width:1.00px;height:284.50px;background:#e1e1e1;"></div>
<div class="r" style="left:745.90px;top:224.50px;width:1.00px;height:284.50px;background:#e1e1e1;"></div>
<div class="r" style="left:792.00px;top:224.50px;width:1.00px;height:284.50px;background:#e1e1e1;"></div>
<div class="r" style="left:819.10px;top:224.50px;width:1.00px;height:284.50px;background:#e1e1e1;"></div>
<div class="r" style="left:899.90px;top:224.50px;width:1.00px;height:284.50px;background:#e1e1e1;"></div>
<div class="r" style="left:17.00px;top:240.00px;width:990.60px;height:1.00px;background:#e1e1e1;"></div>
<div class="r" style="left:0.00px;top:240.00px;width:16.30px;height:1.00px;background:#cdcdcd;"></div>
<div class="r" style="left:17.00px;top:251.00px;width:990.60px;height:1.00px;background:#e1e1e1;"></div>
<div class="r" style="left:0.00px;top:251.00px;width:16.30px;height:1.00px;background:#cdcdcd;"></div>
<div class="r" style="left:17.00px;top:262.00px;width:990.60px;height:1.00px;background:#e1e1e1;"></div>
<div class="r" style="left:0.00px;top:262.00px;width:16.30px;height:1.00px;background:#cdcdcd;"></div>
<div class="r" style="left:17.00px;top:272.00px;width:990.60px;height:1.00px;background:#e1e1e1;"></div>
<div class="r" style="left:0.00px;top:272.00px;width:16.30px;height:1.00px;background:#cdcdcd;"></div>
<div class="r" style="left:17.00px;top:283.00px;width:990.60px;height:1.00px;background:#e1e1e1;"></div>
<div class="r" style="left:0.00px;top:283.00px;width:16.30px;height:1.00px;background:#cdcdcd;"></div>
<div class="r" style="left:17.00px;top:293.00px;width:990.60px;height:1.00px;background:#e1e1e1;"></div>
<div class="r" style="left:0.00px;top:293.00px;width:16.30px;height:1.00px;background:#cdcdcd;"></div>
<div class="r" style="left:17.00px;top:304.00px;width:990.60px;height:1.00px;background:#e1e1e1;"></div>
<div class="r" style="left:0.00px;top:304.00px;width:16.30px;height:1.00px;background:#cdcdcd;"></div>
<div class="r" style="left:17.00px;top:314.00px;width:990.60px;height:1.00px;background:#e1e1e1;"></div>
<div class="r" style="left:0.00px;top:314.00px;width:16.30px;height:1.00px;background:#cdcdcd;"></div>
<div class="r" style="left:17.00px;top:325.00px;width:990.60px;height:1.00px;background:#e1e1e1;"></div>
<div class="r" style="left:0.00px;top:325.00px;width:16.30px;height:1.00px;background:#cdcdcd;"></div>
<div class="r" style="left:17.00px;top:335.00px;width:990.60px;height:1.00px;background:#e1e1e1;"></div>
<div class="r" style="left:0.00px;top:335.00px;width:16.30px;height:1.00px;background:#cdcdcd;"></div>
<div class="r" style="left:17.00px;top:346.00px;width:990.60px;height:1.00px;background:#e1e1e1;"></div>
<div class="r" style="left:0.00px;top:346.00px;width:16.30px;height:1.00px;background:#cdcdcd;"></div>
<div class="r" style="left:17.00px;top:357.00px;width:990.60px;height:1.00px;background:#e1e1e1;"></div>
<div class="r" style="left:0.00px;top:357.00px;width:16.30px;height:1.00px;background:#cdcdcd;"></div>
<div class="r" style="left:17.00px;top:367.00px;width:990.60px;height:1.00px;background:#e1e1e1;"></div>
<div class="r" style="left:0.00px;top:367.00px;width:16.30px;height:1.00px;background:#cdcdcd;"></div>
<div class="r" style="left:17.00px;top:378.00px;width:990.60px;height:1.00px;background:#e1e1e1;"></div>
<div class="r" style="left:0.00px;top:378.00px;width:16.30px;height:1.00px;background:#cdcdcd;"></div>
<div class="r" style="left:17.00px;top:388.00px;width:990.60px;height:1.00px;background:#e1e1e1;"></div>
<div class="r" style="left:0.00px;top:388.00px;width:16.30px;height:1.00px;background:#cdcdcd;"></div>
<div class="r" style="left:17.00px;top:399.00px;width:990.60px;height:1.00px;background:#e1e1e1;"></div>
<div class="r" style="left:0.00px;top:399.00px;width:16.30px;height:1.00px;background:#cdcdcd;"></div>
<div class="r" style="left:17.00px;top:409.00px;width:990.60px;height:1.00px;background:#e1e1e1;"></div>
<div class="r" style="left:0.00px;top:409.00px;width:16.30px;height:1.00px;background:#cdcdcd;"></div>
<div class="r" style="left:17.00px;top:420.00px;width:990.60px;height:1.00px;background:#e1e1e1;"></div>
<div class="r" style="left:0.00px;top:420.00px;width:16.30px;height:1.00px;background:#cdcdcd;"></div>
<div class="r" style="left:17.00px;top:430.00px;width:990.60px;height:1.00px;background:#e1e1e1;"></div>
<div class="r" style="left:0.00px;top:430.00px;width:16.30px;height:1.00px;background:#cdcdcd;"></div>
<div class="r" style="left:17.00px;top:441.00px;width:990.60px;height:1.00px;background:#e1e1e1;"></div>
<div class="r" style="left:0.00px;top:441.00px;width:16.30px;height:1.00px;background:#cdcdcd;"></div>
<div class="r" style="left:17.00px;top:451.00px;width:990.60px;height:1.00px;background:#e1e1e1;"></div>
<div class="r" style="left:0.00px;top:451.00px;width:16.30px;height:1.00px;background:#cdcdcd;"></div>
<div class="r" style="left:17.00px;top:462.00px;width:990.60px;height:1.00px;background:#e1e1e1;"></div>
<div class="r" style="left:0.00px;top:462.00px;width:16.30px;height:1.00px;background:#cdcdcd;"></div>
<div class="r" style="left:17.00px;top:472.00px;width:990.60px;height:1.00px;background:#e1e1e1;"></div>
<div class="r" style="left:0.00px;top:472.00px;width:16.30px;height:1.00px;background:#cdcdcd;"></div>
<div class="r" style="left:17.00px;top:483.00px;width:990.60px;height:1.00px;background:#e1e1e1;"></div>
<div class="r" style="left:0.00px;top:483.00px;width:16.30px;height:1.00px;background:#cdcdcd;"></div>
<div class="r" style="left:17.00px;top:493.00px;width:990.60px;height:1.00px;background:#e1e1e1;"></div>
<div class="r" style="left:0.00px;top:493.00px;width:16.30px;height:1.00px;background:#cdcdcd;"></div>
<div class="r" style="left:17.00px;top:504.00px;width:990.60px;height:1.00px;background:#e1e1e1;"></div>
<div class="r" style="left:0.00px;top:504.00px;width:16.30px;height:1.00px;background:#cdcdcd;"></div>
<div class="r" style="left:80.20px;top:225.00px;width:2.00px;height:15.20px;background:#fff;"></div>
<div class="r" style="left:80.20px;top:241.20px;width:2.00px;height:10.20px;background:#fff;"></div>
<div class="r" style="left:469.90px;top:473.30px;width:2.00px;height:9.52px;background:#fff;"></div>
<div class="r" style="left:469.90px;top:483.82px;width:2.00px;height:9.53px;background:#fff;"></div>
<div class="r" style="left:17.00px;top:262.30px;width:990.60px;height:10.52px;background:#4472c4;"></div>
<div class="r" style="left:81.20px;top:272.82px;width:272.40px;height:10.53px;background:#f4707e;"></div>
<div class="r" style="left:567.70px;top:272.82px;width:102.00px;height:10.53px;background:#c6e0b4;"></div>
<div class="r" style="left:17.00px;top:283.35px;width:990.60px;height:10.52px;background:#ffe699;"></div>
<div class="r" style="left:17.00px;top:293.87px;width:990.60px;height:10.53px;background:#ffe699;"></div>
<div class="r" style="left:17.00px;top:304.40px;width:990.60px;height:10.52px;background:#ffe699;"></div>
<div class="r" style="left:17.00px;top:314.92px;width:990.60px;height:10.53px;background:#ffe699;"></div>
<div class="r" style="left:17.00px;top:346.50px;width:990.60px;height:10.52px;background:#ffe699;"></div>
<div class="r" style="left:17.00px;top:357.02px;width:990.60px;height:10.53px;background:#ffe699;"></div>
<div class="r" style="left:17.00px;top:367.55px;width:990.60px;height:10.52px;background:#ffe699;"></div>
<div class="r" style="left:17.00px;top:378.07px;width:990.60px;height:10.53px;background:#ffe699;"></div>
<div class="r" style="left:17.00px;top:335.97px;width:990.60px;height:10.53px;background:#f4707e;"></div>
<div class="r" style="left:17.00px;top:283.00px;width:990.60px;height:1.00px;background:#8faadc;"></div>
<div class="r" style="left:17.00px;top:293.00px;width:990.60px;height:1.00px;background:#8faadc;"></div>
<div class="r" style="left:17.00px;top:304.00px;width:990.60px;height:1.00px;background:#8faadc;"></div>
<div class="r" style="left:17.00px;top:314.00px;width:990.60px;height:1.00px;background:#8faadc;"></div>
<div class="r" style="left:17.00px;top:325.00px;width:990.60px;height:1.00px;background:#8faadc;"></div>
<div class="r" style="left:17.00px;top:335.00px;width:990.60px;height:1.00px;background:#8faadc;"></div>
<div class="r" style="left:17.00px;top:346.00px;width:990.60px;height:1.00px;background:#8faadc;"></div>
<div class="r" style="left:17.00px;top:357.00px;width:990.60px;height:1.00px;background:#8faadc;"></div>
<div class="r" style="left:17.00px;top:367.00px;width:990.60px;height:1.00px;background:#8faadc;"></div>
<div class="r" style="left:17.00px;top:378.00px;width:990.60px;height:1.00px;background:#8faadc;"></div>
<div class="r" style="left:17.00px;top:388.00px;width:990.60px;height:1.00px;background:#8faadc;"></div>
<div class="r" style="left:17.00px;top:389.40px;width:990.60px;height:0.70px;background:#8faadc;"></div>
<div class="r" style="left:17.00px;top:399.00px;width:990.60px;height:1.00px;background:#8faadc;"></div>
<span class="t" style="top:228.30px;line-height:14px;font-size:8.4px;color:#222;left:-92.80px;width:200px;text-align:center;-webkit-text-stroke:0.2px #222;transform:scaleX(0.7385);transform-origin:center center;">1</span>
<span class="t" style="top:239.60px;line-height:14px;font-size:8.4px;color:#222;left:-92.80px;width:200px;text-align:center;-webkit-text-stroke:0.2px #222;transform:scaleX(0.7385);transform-origin:center center;">2</span>
<span class="t" style="top:250.40px;line-height:14px;font-size:8.4px;color:#222;left:-92.80px;width:200px;text-align:center;-webkit-text-stroke:0.2px #222;transform:scaleX(0.7385);transform-origin:center center;">3</span>
<span class="t" style="top:260.86px;line-height:14px;font-size:8.4px;color:#222;left:-92.80px;width:200px;text-align:center;-webkit-text-stroke:0.2px #222;transform:scaleX(0.7385);transform-origin:center center;">4</span>
<span class="t" style="top:271.39px;line-height:14px;font-size:8.4px;color:#1c1cf4;left:-92.80px;width:200px;text-align:center;-webkit-text-stroke:0.2px #1c1cf4;transform:scaleX(0.7397);transform-origin:center center;">51</span>
<span class="t" style="top:281.91px;line-height:14px;font-size:8.4px;color:#1c1cf4;left:-92.80px;width:200px;text-align:center;-webkit-text-stroke:0.2px #1c1cf4;transform:scaleX(0.7397);transform-origin:center center;">52</span>
<span class="t" style="top:292.44px;line-height:14px;font-size:8.4px;color:#1c1cf4;left:-92.80px;width:200px;text-align:center;-webkit-text-stroke:0.2px #1c1cf4;transform:scaleX(0.7397);transform-origin:center center;">53</span>
<span class="t" style="top:302.96px;line-height:14px;font-size:8.4px;color:#1c1cf4;left:-92.80px;width:200px;text-align:center;-webkit-text-stroke:0.2px #1c1cf4;transform:scaleX(0.7397);transform-origin:center center;">54</span>
<span class="t" style="top:313.49px;line-height:14px;font-size:8.4px;color:#1c1cf4;left:-92.80px;width:200px;text-align:center;-webkit-text-stroke:0.2px #1c1cf4;transform:scaleX(0.7397);transform-origin:center center;">55</span>
<span class="t" style="top:324.01px;line-height:14px;font-size:8.4px;color:#1c1cf4;left:-92.80px;width:200px;text-align:center;-webkit-text-stroke:0.2px #1c1cf4;transform:scaleX(0.7397);transform-origin:center center;">56</span>
<span class="t" style="top:334.54px;line-height:14px;font-size:8.4px;color:#1c1cf4;left:-92.80px;width:200px;text-align:center;-webkit-text-stroke:0.2px #1c1cf4;transform:scaleX(0.7397);transform-origin:center center;">57</span>
<span class="t" style="top:345.06px;line-height:14px;font-size:8.4px;color:#1c1cf4;left:-92.80px;width:200px;text-align:center;-webkit-text-stroke:0.2px #1c1cf4;transform:scaleX(0.7397);transform-origin:center center;">58</span>
<span class="t" style="top:355.58px;line-height:14px;font-size:8.4px;color:#1c1cf4;left:-92.80px;width:200px;text-align:center;-webkit-text-stroke:0.2px #1c1cf4;transform:scaleX(0.7397);transform-origin:center center;">59</span>
<span class="t" style="top:366.11px;line-height:14px;font-size:8.4px;color:#1c1cf4;left:-92.80px;width:200px;text-align:center;-webkit-text-stroke:0.2px #1c1cf4;transform:scaleX(0.7397);transform-origin:center center;">60</span>
<span class="t" style="top:376.64px;line-height:14px;font-size:8.4px;color:#1c1cf4;left:-92.80px;width:200px;text-align:center;-webkit-text-stroke:0.2px #1c1cf4;transform:scaleX(0.7397);transform-origin:center center;">61</span>
<span class="t" style="top:387.16px;line-height:14px;font-size:8.4px;color:#222;left:-92.80px;width:200px;text-align:center;-webkit-text-stroke:0.2px #222;transform:scaleX(0.7397);transform-origin:center center;">62</span>
<span class="t" style="top:397.69px;line-height:14px;font-size:8.4px;color:#222;left:-92.80px;width:200px;text-align:center;-webkit-text-stroke:0.2px #222;transform:scaleX(0.7397);transform-origin:center center;">63</span>
<span class="t" style="top:408.21px;line-height:14px;font-size:8.4px;color:#222;left:-92.80px;width:200px;text-align:center;-webkit-text-stroke:0.2px #222;transform:scaleX(0.7397);transform-origin:center center;">64</span>
<span class="t" style="top:418.74px;line-height:14px;font-size:8.4px;color:#222;left:-92.80px;width:200px;text-align:center;-webkit-text-stroke:0.2px #222;transform:scaleX(0.7397);transform-origin:center center;">65</span>
<span class="t" style="top:429.26px;line-height:14px;font-size:8.4px;color:#222;left:-92.80px;width:200px;text-align:center;-webkit-text-stroke:0.2px #222;transform:scaleX(0.7397);transform-origin:center center;">66</span>
<span class="t" style="top:439.79px;line-height:14px;font-size:8.4px;color:#222;left:-92.80px;width:200px;text-align:center;-webkit-text-stroke:0.2px #222;transform:scaleX(0.7397);transform-origin:center center;">67</span>
<span class="t" style="top:450.31px;line-height:14px;font-size:8.4px;color:#222;left:-92.80px;width:200px;text-align:center;-webkit-text-stroke:0.2px #222;transform:scaleX(0.7397);transform-origin:center center;">68</span>
<span class="t" style="top:460.83px;line-height:14px;font-size:8.4px;color:#222;left:-92.80px;width:200px;text-align:center;-webkit-text-stroke:0.2px #222;transform:scaleX(0.7397);transform-origin:center center;">69</span>
<span class="t" style="top:471.36px;line-height:14px;font-size:8.4px;color:#222;left:-92.80px;width:200px;text-align:center;-webkit-text-stroke:0.2px #222;transform:scaleX(0.7397);transform-origin:center center;">70</span>
<span class="t" style="top:481.89px;line-height:14px;font-size:8.4px;color:#222;left:-92.80px;width:200px;text-align:center;-webkit-text-stroke:0.2px #222;transform:scaleX(0.7397);transform-origin:center center;">71</span>
<div class="r" style="left:0.00px;top:493.85px;width:16.30px;height:10.52px;background:#d2d2d2;"></div>
<div class="r" style="left:15.60px;top:493.85px;width:1.40px;height:10.52px;background:#217346;"></div>
<span class="t" style="top:492.41px;line-height:14px;font-size:8.4px;color:#217346;left:-92.80px;width:200px;text-align:center;-webkit-text-stroke:0.2px #217346;transform:scaleX(0.7397);transform-origin:center center;">72</span>
<span class="t" style="top:502.94px;line-height:14px;font-size:8.4px;color:#222;left:-92.80px;width:200px;text-align:center;-webkit-text-stroke:0.2px #222;transform:scaleX(0.7397);transform-origin:center center;">73</span>
<span class="t" style="top:226.40px;line-height:14px;font-size:12px;color:#222;left:19.80px;transform:scaleX(0.9859);transform-origin:left center;">Vertaalde artikelen</span>
<span class="t" style="top:239.60px;line-height:14px;font-size:7.6px;color:#222;font-weight:700;font-style:italic;left:19.20px;transform:scaleX(0.9736);transform-origin:left center;">Laatste wijziging 5 april 2020</span>
<div class="r" style="left:19.60px;top:262.30px;width:51.50px;height:10.52px;overflow:hidden;"><span class="t" style="top:-1.54px;line-height:14px;font-size:8.8px;color:#fff;font-weight:700;left:0.00px;transform:scaleX(0.9315);transform-origin:left center;">Krant of arch</span></div>
<div class="r" style="left:71.10px;top:262.50px;width:9.30px;height:9.82px;background:#f6f6f6;border:0.8px solid #c4c4c4;box-sizing:border-box;"></div>
<svg class="r" style="left:72.60px;top:264.70px;" width="7" height="6" viewBox="0 0 7 6"><path d="M0.4 3.2 H3 L1.7 4.8 Z" fill="#444"/><path d="M3 0.8 H6.6 L5.4 2.2 V5 H4.2 V2.2 Z" fill="#444"/></svg>
<div class="r" style="left:83.80px;top:262.30px;width:123.30px;height:10.52px;overflow:hidden;"><span class="t" style="top:-1.54px;line-height:14px;font-size:8.8px;color:#fff;font-weight:700;left:0.00px;transform:scaleX(0.9545);transform-origin:left center;">Code</span></div>
<div class="r" style="left:207.10px;top:262.50px;width:9.30px;height:9.82px;background:#f6f6f6;border:0.8px solid #c4c4c4;box-sizing:border-box;"></div>
<svg class="r" style="left:208.60px;top:264.70px;" width="7" height="6" viewBox="0 0 7 6"><path d="M1.6 2.2 H5.4 L3.5 4.4 Z" fill="#6a6a6a"/></svg>
<div class="r" style="left:219.80px;top:262.30px;width:123.70px;height:10.52px;overflow:hidden;"><span class="t" style="top:-1.54px;line-height:14px;font-size:8.8px;color:#fff;font-weight:700;left:0.00px;transform:scaleX(0.9918);transform-origin:left center;">Kolom2</span></div>
<div class="r" style="left:343.50px;top:262.50px;width:9.30px;height:9.82px;background:#f6f6f6;border:0.8px solid #c4c4c4;box-sizing:border-box;"></div>
<svg class="r" style="left:345.00px;top:264.70px;" width="7" height="6" viewBox="0 0 7 6"><path d="M1 3.4 H3 V5 H1 Z" fill="#666"/><path d="M4.4 1 V5" stroke="#999" stroke-width="1.4"/></svg>
<div class="r" style="left:356.20px;top:262.30px;width:46.90px;height:10.52px;overflow:hidden;"><span class="t" style="top:-1.54px;line-height:14px;font-size:8.8px;color:#fff;font-weight:700;left:0.00px;transform:scaleX(0.9554);transform-origin:left center;">Bevat</span></div>
<div class="r" style="left:403.10px;top:262.50px;width:9.30px;height:9.82px;background:#f6f6f6;border:0.8px solid #c4c4c4;box-sizing:border-box;"></div>
<svg class="r" style="left:404.60px;top:264.70px;" width="7" height="6" viewBox="0 0 7 6"><path d="M1.6 2.2 H5.4 L3.5 4.4 Z" fill="#6a6a6a"/></svg>
<div class="r" style="left:415.80px;top:262.30px;width:45.00px;height:10.52px;overflow:hidden;"><span class="t" style="top:-1.54px;line-height:14px;font-size:8.8px;color:#fff;font-weight:700;left:0.00px;transform:scaleX(1.0298);transform-origin:left center;">Wanneer w</span></div>
<div class="r" style="left:460.80px;top:262.50px;width:9.30px;height:9.82px;background:#f6f6f6;border:0.8px solid #c4c4c4;box-sizing:border-box;"></div>
<svg class="r" style="left:462.30px;top:264.70px;" width="7" height="6" viewBox="0 0 7 6"><path d="M1.6 2.2 H5.4 L3.5 4.4 Z" fill="#6a6a6a"/></svg>
<div class="r" style="left:473.50px;top:262.30px;width:35.60px;height:10.52px;overflow:hidden;"><span class="t" style="top:-1.54px;line-height:14px;font-size:8.8px;color:#fff;font-weight:700;left:0.00px;transform:scaleX(1.0107);transform-origin:left center;">Vertaald</span></div>
<div class="r" style="left:509.10px;top:262.50px;width:9.30px;height:9.82px;background:#f6f6f6;border:0.8px solid #c4c4c4;box-sizing:border-box;"></div>
<svg class="r" style="left:510.60px;top:264.70px;" width="7" height="6" viewBox="0 0 7 6"><path d="M1.6 2.2 H5.4 L3.5 4.4 Z" fill="#6a6a6a"/></svg>
<div class="r" style="left:521.80px;top:262.30px;width:35.80px;height:10.52px;overflow:hidden;"><span class="t" style="top:-1.54px;line-height:14px;font-size:8.8px;color:#fff;font-weight:700;left:0.00px;transform:scaleX(1.0093);transform-origin:left center;">Aantal p.</span></div>
<div class="r" style="left:557.60px;top:262.50px;width:9.30px;height:9.82px;background:#f6f6f6;border:0.8px solid #c4c4c4;box-sizing:border-box;"></div>
<svg class="r" style="left:559.10px;top:264.70px;" width="7" height="6" viewBox="0 0 7 6"><path d="M1.6 2.2 H5.4 L3.5 4.4 Z" fill="#6a6a6a"/></svg>
<div class="r" style="left:570.30px;top:262.30px;width:89.30px;height:10.52px;overflow:hidden;"><span class="t" style="top:-1.54px;line-height:14px;font-size:8.8px;color:#fff;font-weight:700;left:0.00px;transform:scaleX(0.9486);transform-origin:left center;">Thema?</span></div>
<div class="r" style="left:659.60px;top:262.50px;width:9.30px;height:9.82px;background:#f6f6f6;border:0.8px solid #c4c4c4;box-sizing:border-box;"></div>
<svg class="r" style="left:661.10px;top:264.70px;" width="7" height="6" viewBox="0 0 7 6"><path d="M1.6 2.2 H5.4 L3.5 4.4 Z" fill="#6a6a6a"/></svg>
<div class="r" style="left:672.30px;top:262.30px;width:37.30px;height:10.52px;overflow:hidden;"><span class="t" style="top:-1.54px;line-height:14px;font-size:8.8px;color:#fff;font-weight:700;left:0.00px;transform:scaleX(0.9425);transform-origin:left center;">Datum</span></div>
<div class="r" style="left:709.60px;top:262.50px;width:9.30px;height:9.82px;background:#f6f6f6;border:0.8px solid #c4c4c4;box-sizing:border-box;"></div>
<svg class="r" style="left:711.10px;top:264.70px;" width="7" height="6" viewBox="0 0 7 6"><path d="M1.6 2.2 H5.4 L3.5 4.4 Z" fill="#6a6a6a"/></svg>
<div class="r" style="left:722.30px;top:262.30px;width:14.00px;height:10.52px;overflow:hidden;"><span class="t" style="top:-1.54px;line-height:14px;font-size:8.8px;color:#fff;font-weight:700;left:0.00px;transform:scaleX(1.0526);transform-origin:left center;">Dag</span></div>
<div class="r" style="left:736.30px;top:262.50px;width:9.30px;height:9.82px;background:#f6f6f6;border:0.8px solid #c4c4c4;box-sizing:border-box;"></div>
<svg class="r" style="left:737.80px;top:264.70px;" width="7" height="6" viewBox="0 0 7 6"><path d="M1.6 2.2 H5.4 L3.5 4.4 Z" fill="#6a6a6a"/></svg>
<div class="r" style="left:749.00px;top:262.30px;width:33.40px;height:10.52px;overflow:hidden;"><span class="t" style="top:-1.54px;line-height:14px;font-size:8.8px;color:#fff;font-weight:700;left:0.00px;transform:scaleX(0.983);transform-origin:left center;">Maand</span></div>
<div class="r" style="left:782.40px;top:262.50px;width:9.30px;height:9.82px;background:#f6f6f6;border:0.8px solid #c4c4c4;box-sizing:border-box;"></div>
<svg class="r" style="left:783.90px;top:264.70px;" width="7" height="6" viewBox="0 0 7 6"><path d="M1.6 2.2 H5.4 L3.5 4.4 Z" fill="#6a6a6a"/></svg>
<div class="r" style="left:795.10px;top:262.30px;width:14.40px;height:10.52px;overflow:hidden;"><span class="t" style="top:-1.54px;line-height:14px;font-size:8.8px;color:#fff;font-weight:700;left:0.00px;transform:scaleX(1.0271);transform-origin:left center;">Jaar</span></div>
<div class="r" style="left:809.50px;top:262.50px;width:9.30px;height:9.82px;background:#f6f6f6;border:0.8px solid #c4c4c4;box-sizing:border-box;"></div>
<svg class="r" style="left:811.00px;top:264.70px;" width="7" height="6" viewBox="0 0 7 6"><path d="M1.6 2.2 H5.4 L3.5 4.4 Z" fill="#6a6a6a"/></svg>
<div class="r" style="left:822.20px;top:262.30px;width:68.10px;height:10.52px;overflow:hidden;"><span class="t" style="top:-1.54px;line-height:14px;font-size:8.8px;color:#fff;font-weight:700;left:0.00px;transform:scaleX(0.9572);transform-origin:left center;">Krant</span></div>
<div class="r" style="left:890.30px;top:262.50px;width:9.30px;height:9.82px;background:#f6f6f6;border:0.8px solid #c4c4c4;box-sizing:border-box;"></div>
<svg class="r" style="left:891.80px;top:264.70px;" width="7" height="6" viewBox="0 0 7 6"><path d="M1.6 2.2 H5.4 L3.5 4.4 Z" fill="#6a6a6a"/></svg>
<div class="r" style="left:903.00px;top:262.30px;width:104.60px;height:10.52px;overflow:hidden;"><span class="t" style="top:-1.54px;line-height:14px;font-size:8.8px;color:#fff;font-weight:700;left:0.00px;transform:scaleX(0.9435);transform-origin:left center;">Overig</span></div>
<span class="t" style="top:271.29px;line-height:14px;font-size:9.0px;color:#111;left:19.60px;-webkit-text-stroke:0.22px #111;transform:scaleX(0.8496);transform-origin:left center;">Digitaal</span>
<span class="t" style="top:271.29px;line-height:14px;font-size:9.0px;color:#111;left:83.80px;-webkit-text-stroke:0.22px #111;transform:scaleX(0.7975);transform-origin:left center;">192_6_110</span>
<span class="t" style="top:271.29px;line-height:14px;font-size:9.0px;color:#111;left:219.80px;-webkit-text-stroke:0.22px #111;transform:scaleX(0.7975);transform-origin:left center;">192_6_110</span>
<span class="t" style="top:271.29px;line-height:14px;font-size:9.0px;color:#111;left:356.20px;-webkit-text-stroke:0.22px #111;transform:scaleX(0.7975);transform-origin:left center;">192_6_110</span>
<span class="t" style="top:271.29px;line-height:14px;font-size:9.0px;color:#111;left:473.50px;-webkit-text-stroke:0.22px #111;transform:scaleX(0.8411);transform-origin:left center;">Niet vertaald</span>
<span class="t" style="top:271.29px;line-height:14px;font-size:9.0px;color:#111;left:570.30px;-webkit-text-stroke:0.22px #111;transform:scaleX(0.845);transform-origin:left center;">Nog niet vertaald (maar 4p.)</span>
<span class="t" style="top:271.29px;line-height:14px;font-size:9.0px;color:#111;left:903.00px;-webkit-text-stroke:0.22px #111;transform:scaleX(0.8495);transform-origin:left center;">Hoofdstuk 2 - paragraaf 1</span>
<span class="t" style="top:281.81px;line-height:14px;font-size:9.0px;color:#111;left:19.60px;-webkit-text-stroke:0.22px #111;transform:scaleX(0.8495);transform-origin:left center;">Archief</span>
<span class="t" style="top:281.81px;line-height:14px;font-size:9.0px;color:#111;left:83.80px;-webkit-text-stroke:0.22px #111;transform:scaleX(0.7975);transform-origin:left center;">192_6_116</span>
<span class="t" style="top:281.81px;line-height:14px;font-size:9.0px;color:#111;left:219.80px;-webkit-text-stroke:0.22px #111;transform:scaleX(0.7975);transform-origin:left center;">192_6_116</span>
<span class="t" style="top:281.81px;line-height:14px;font-size:9.0px;color:#111;left:356.20px;-webkit-text-stroke:0.22px #111;transform:scaleX(0.7975);transform-origin:left center;">192_6_116</span>
<span class="t" style="top:281.81px;line-height:14px;font-size:9.0px;color:#111;right:554.90px;-webkit-text-stroke:0.22px #111;transform:scaleX(0.8233);transform-origin:right center;">9-6-2018</span>
<span class="t" style="top:281.81px;line-height:14px;font-size:9.0px;color:#111;left:473.50px;-webkit-text-stroke:0.22px #111;transform:scaleX(0.8343);transform-origin:left center;">Wel vertaald</span>
<span class="t" style="top:281.81px;line-height:14px;font-size:9.0px;color:#111;right:458.10px;-webkit-text-stroke:0.22px #111;transform:scaleX(0.7973);transform-origin:right center;">17</span>
<span class="t" style="top:281.81px;line-height:14px;font-size:9.0px;color:#111;left:570.30px;-webkit-text-stroke:0.22px #111;transform:scaleX(0.845);transform-origin:left center;">Ziekenenhuis</span>
<span class="t" style="top:281.81px;line-height:14px;font-size:9.0px;color:#111;left:903.00px;-webkit-text-stroke:0.22px #111;transform:scaleX(0.8495);transform-origin:left center;">Hoofdstuk 2 - paragraaf 4</span>
<span class="t" style="top:292.33px;line-height:14px;font-size:9.0px;color:#111;left:19.60px;-webkit-text-stroke:0.22px #111;transform:scaleX(0.8495);transform-origin:left center;">Archief</span>
<span class="t" style="top:292.33px;line-height:14px;font-size:9.0px;color:#111;left:83.80px;-webkit-text-stroke:0.22px #111;transform:scaleX(0.8155);transform-origin:left center;">192_6_136</span>
<span class="t" style="top:292.33px;line-height:14px;font-size:9.0px;color:#111;left:219.80px;-webkit-text-stroke:0.22px #111;transform:scaleX(0.8155);transform-origin:left center;">192_6_136</span>
<span class="t" style="top:292.33px;line-height:14px;font-size:9.0px;color:#111;left:356.20px;-webkit-text-stroke:0.22px #111;transform:scaleX(0.8155);transform-origin:left center;">192_6_136</span>
<span class="t" style="top:292.33px;line-height:14px;font-size:9.0px;color:#111;right:554.90px;-webkit-text-stroke:0.22px #111;transform:scaleX(0.8233);transform-origin:right center;">9-6-2018</span>
<span class="t" style="top:292.33px;line-height:14px;font-size:9.0px;color:#111;left:473.50px;-webkit-text-stroke:0.22px #111;transform:scaleX(0.8343);transform-origin:left center;">Wel vertaald</span>
<span class="t" style="top:292.33px;line-height:14px;font-size:9.0px;color:#111;right:458.10px;-webkit-text-stroke:0.22px #111;transform:scaleX(0.7973);transform-origin:right center;">11</span>
<span class="t" style="top:292.33px;line-height:14px;font-size:9.0px;color:#111;left:570.30px;-webkit-text-stroke:0.22px #111;transform:scaleX(0.845);transform-origin:left center;">Belasting op lastdieren</span>
<span class="t" style="top:292.33px;line-height:14px;font-size:9.0px;color:#111;left:903.00px;-webkit-text-stroke:0.22px #111;transform:scaleX(0.8495);transform-origin:left center;">Hoofdstuk 2 - paragraaf 5</span>
<span class="t" style="top:302.86px;line-height:14px;font-size:9.0px;color:#111;left:19.60px;-webkit-text-stroke:0.22px #111;transform:scaleX(0.8495);transform-origin:left center;">Archief</span>
<span class="t" style="top:302.86px;line-height:14px;font-size:9.0px;color:#111;left:83.80px;-webkit-text-stroke:0.22px #111;transform:scaleX(0.8155);transform-origin:left center;">192_6_137</span>
<span class="t" style="top:302.86px;line-height:14px;font-size:9.0px;color:#111;left:219.80px;-webkit-text-stroke:0.22px #111;transform:scaleX(0.8155);transform-origin:left center;">192_6_137</span>
<span class="t" style="top:302.86px;line-height:14px;font-size:9.0px;color:#111;left:356.20px;-webkit-text-stroke:0.22px #111;transform:scaleX(0.8155);transform-origin:left center;">192_6_137</span>
<span class="t" style="top:302.86px;line-height:14px;font-size:9.0px;color:#111;right:554.90px;-webkit-text-stroke:0.22px #111;transform:scaleX(0.8233);transform-origin:right center;">43294</span>
<span class="t" style="top:302.86px;line-height:14px;font-size:9.0px;color:#111;left:473.50px;-webkit-text-stroke:0.22px #111;transform:scaleX(0.8343);transform-origin:left center;">Wel vertaald</span>
<span class="t" style="top:302.86px;line-height:14px;font-size:9.0px;color:#111;right:458.10px;-webkit-text-stroke:0.22px #111;transform:scaleX(0.7973);transform-origin:right center;">12</span>
<span class="t" style="top:302.86px;line-height:14px;font-size:9.0px;color:#111;left:570.30px;-webkit-text-stroke:0.22px #111;transform:scaleX(0.845);transform-origin:left center;">Veeziektes</span>
<span class="t" style="top:313.38px;line-height:14px;font-size:9.0px;color:#111;left:19.60px;-webkit-text-stroke:0.22px #111;transform:scaleX(0.8495);transform-origin:left center;">Archief</span>
<span class="t" style="top:313.38px;line-height:14px;font-size:9.0px;color:#111;left:83.80px;-webkit-text-stroke:0.22px #111;transform:scaleX(0.8155);transform-origin:left center;">192_6_172</span>
<span class="t" style="top:313.38px;line-height:14px;font-size:9.0px;color:#111;left:219.80px;-webkit-text-stroke:0.22px #111;transform:scaleX(0.8155);transform-origin:left center;">192_6_172</span>
<span class="t" style="top:313.38px;line-height:14px;font-size:9.0px;color:#111;left:356.20px;-webkit-text-stroke:0.22px #111;transform:scaleX(0.8155);transform-origin:left center;">192_6_172</span>
<span class="t" style="top:313.38px;line-height:14px;font-size:9.0px;color:#111;right:554.90px;-webkit-text-stroke:0.22px #111;transform:scaleX(0.8233);transform-origin:right center;">13-7-2018</span>
<span class="t" style="top:313.38px;line-height:14px;font-size:9.0px;color:#111;left:473.50px;-webkit-text-stroke:0.22px #111;transform:scaleX(0.8343);transform-origin:left center;">Wel vertaald</span>
<span class="t" style="top:313.38px;line-height:14px;font-size:9.0px;color:#111;left:570.30px;-webkit-text-stroke:0.22px #111;transform:scaleX(0.845);transform-origin:left center;">Onderwijs</span>
<span class="t" style="top:323.91px;line-height:14px;font-size:9.0px;color:#111;left:19.60px;-webkit-text-stroke:0.22px #111;transform:scaleX(0.8495);transform-origin:left center;">Archief</span>
<span class="t" style="top:323.91px;line-height:14px;font-size:9.0px;color:#111;left:83.80px;-webkit-text-stroke:0.22px #111;transform:scaleX(0.8155);transform-origin:left center;">192_6_184</span>
<span class="t" style="top:323.91px;line-height:14px;font-size:9.0px;color:#111;left:219.80px;-webkit-text-stroke:0.22px #111;transform:scaleX(0.8155);transform-origin:left center;">192_6_184</span>
<span class="t" style="top:323.91px;line-height:14px;font-size:9.0px;color:#111;left:356.20px;-webkit-text-stroke:0.22px #111;transform:scaleX(0.8155);transform-origin:left center;">192_6_184</span>
<span class="t" style="top:323.91px;line-height:14px;font-size:9.0px;color:#111;right:554.90px;-webkit-text-stroke:0.22px #111;transform:scaleX(0.8233);transform-origin:right center;">29-8-2018</span>
<span class="t" style="top:323.91px;line-height:14px;font-size:9.0px;color:#111;left:473.50px;-webkit-text-stroke:0.22px #111;transform:scaleX(0.8343);transform-origin:left center;">Wel vertaald</span>
<span class="t" style="top:323.91px;line-height:14px;font-size:9.0px;color:#111;left:570.30px;-webkit-text-stroke:0.22px #111;transform:scaleX(0.845);transform-origin:left center;">Joden</span>
<span class="t" style="top:323.91px;line-height:14px;font-size:9.0px;color:#111;left:903.00px;-webkit-text-stroke:0.22px #111;transform:scaleX(0.837);transform-origin:left center;">Hoofdstuk 1</span>
<span class="t" style="top:334.44px;line-height:14px;font-size:9.0px;color:#111;left:19.60px;-webkit-text-stroke:0.22px #111;transform:scaleX(0.8495);transform-origin:left center;">Archief</span>
<span class="t" style="top:334.44px;line-height:14px;font-size:9.0px;color:#111;left:83.80px;-webkit-text-stroke:0.22px #111;transform:scaleX(0.8428);transform-origin:left center;">192_6_62</span>
<span class="t" style="top:334.44px;line-height:14px;font-size:9.0px;color:#111;left:219.80px;-webkit-text-stroke:0.22px #111;transform:scaleX(0.8428);transform-origin:left center;">192_6_62</span>
<span class="t" style="top:334.44px;line-height:14px;font-size:9.0px;color:#111;left:356.20px;-webkit-text-stroke:0.22px #111;transform:scaleX(0.8428);transform-origin:left center;">192_6_62</span>
<span class="t" style="top:334.44px;line-height:14px;font-size:9.0px;color:#111;right:554.90px;-webkit-text-stroke:0.22px #111;transform:scaleX(0.8233);transform-origin:right center;">43260</span>
<span class="t" style="top:334.44px;line-height:14px;font-size:9.0px;color:#111;left:473.50px;-webkit-text-stroke:0.22px #111;transform:scaleX(0.8343);transform-origin:left center;">Wel vertaald</span>
<span class="t" style="top:334.44px;line-height:14px;font-size:9.0px;color:#111;right:458.10px;-webkit-text-stroke:0.22px #111;transform:scaleX(0.7973);transform-origin:right center;">3</span>
<span class="t" style="top:334.44px;line-height:14px;font-size:9.0px;color:#111;left:570.30px;-webkit-text-stroke:0.22px #111;transform:scaleX(0.845);transform-origin:left center;">Onleesbaar</span>
<span class="t" style="top:344.96px;line-height:14px;font-size:9.0px;color:#111;left:19.60px;-webkit-text-stroke:0.22px #111;transform:scaleX(0.8495);transform-origin:left center;">Archief</span>
<span class="t" style="top:344.96px;line-height:14px;font-size:9.0px;color:#111;left:83.80px;-webkit-text-stroke:0.22px #111;transform:scaleX(0.8428);transform-origin:left center;">192_6_73</span>
<span class="t" style="top:344.96px;line-height:14px;font-size:9.0px;color:#111;left:219.80px;-webkit-text-stroke:0.22px #111;transform:scaleX(0.8428);transform-origin:left center;">192_6_73</span>
<span class="t" style="top:344.96px;line-height:14px;font-size:9.0px;color:#111;left:356.20px;-webkit-text-stroke:0.22px #111;transform:scaleX(0.8428);transform-origin:left center;">192_6_73</span>
<span class="t" style="top:344.96px;line-height:14px;font-size:9.0px;color:#111;right:554.90px;-webkit-text-stroke:0.22px #111;transform:scaleX(0.8233);transform-origin:right center;">43260</span>
<span class="t" style="top:344.96px;line-height:14px;font-size:9.0px;color:#111;left:473.50px;-webkit-text-stroke:0.22px #111;transform:scaleX(0.8343);transform-origin:left center;">Wel vertaald</span>
<span class="t" style="top:344.96px;line-height:14px;font-size:9.0px;color:#111;right:458.10px;-webkit-text-stroke:0.22px #111;transform:scaleX(0.7973);transform-origin:right center;">20</span>
<span class="t" style="top:344.96px;line-height:14px;font-size:9.0px;color:#111;left:570.30px;-webkit-text-stroke:0.22px #111;transform:scaleX(0.845);transform-origin:left center;">Handelspolitie en begroting</span>
<span class="t" style="top:355.48px;line-height:14px;font-size:9.0px;color:#111;left:19.60px;-webkit-text-stroke:0.22px #111;transform:scaleX(0.8495);transform-origin:left center;">Archief</span>
<span class="t" style="top:355.48px;line-height:14px;font-size:9.0px;color:#111;left:83.80px;-webkit-text-stroke:0.22px #111;transform:scaleX(0.8428);transform-origin:left center;">192_7_33</span>
<span class="t" style="top:355.48px;line-height:14px;font-size:9.0px;color:#111;left:219.80px;-webkit-text-stroke:0.22px #111;transform:scaleX(0.8428);transform-origin:left center;">192_7_33</span>
<span class="t" style="top:355.48px;line-height:14px;font-size:9.0px;color:#111;left:356.20px;-webkit-text-stroke:0.22px #111;transform:scaleX(0.8428);transform-origin:left center;">192_7_33</span>
<span class="t" style="top:355.48px;line-height:14px;font-size:9.0px;color:#111;right:554.90px;-webkit-text-stroke:0.22px #111;transform:scaleX(0.8233);transform-origin:right center;">14-7-2018</span>
<span class="t" style="top:355.48px;line-height:14px;font-size:9.0px;color:#111;left:473.50px;-webkit-text-stroke:0.22px #111;transform:scaleX(0.8343);transform-origin:left center;">Wel vertaald</span>
<span class="t" style="top:355.48px;line-height:14px;font-size:9.0px;color:#111;left:570.30px;-webkit-text-stroke:0.22px #111;transform:scaleX(0.845);transform-origin:left center;">Giften aan de stad</span>
<span class="t" style="top:366.01px;line-height:14px;font-size:9.0px;color:#111;left:19.60px;-webkit-text-stroke:0.22px #111;transform:scaleX(0.8495);transform-origin:left center;">Archief</span>
<span class="t" style="top:366.01px;line-height:14px;font-size:9.0px;color:#111;left:83.80px;-webkit-text-stroke:0.22px #111;transform:scaleX(0.8428);transform-origin:left center;">192_7_75</span>
<span class="t" style="top:366.01px;line-height:14px;font-size:9.0px;color:#111;left:219.80px;-webkit-text-stroke:0.22px #111;transform:scaleX(0.8428);transform-origin:left center;">192_7_75</span>
<span class="t" style="top:366.01px;line-height:14px;font-size:9.0px;color:#111;left:356.20px;-webkit-text-stroke:0.22px #111;transform:scaleX(0.8428);transform-origin:left center;">192_7_75</span>
<span class="t" style="top:366.01px;line-height:14px;font-size:9.0px;color:#111;right:554.90px;-webkit-text-stroke:0.22px #111;transform:scaleX(0.8233);transform-origin:right center;">21-7-2018</span>
<span class="t" style="top:366.01px;line-height:14px;font-size:9.0px;color:#111;left:473.50px;-webkit-text-stroke:0.22px #111;transform:scaleX(0.8343);transform-origin:left center;">Wel vertaald</span>
<span class="t" style="top:366.01px;line-height:14px;font-size:9.0px;color:#111;right:458.10px;-webkit-text-stroke:0.22px #111;transform:scaleX(0.7973);transform-origin:right center;">22:26</span>
<span class="t" style="top:366.01px;line-height:14px;font-size:9.0px;color:#111;left:570.30px;-webkit-text-stroke:0.22px #111;transform:scaleX(0.845);transform-origin:left center;">Gemeentelijke begroting</span>
<span class="t" style="top:366.01px;line-height:14px;font-size:9.0px;color:#111;left:682.50px;-webkit-text-stroke:0.22px #111;transform:scaleX(0.8233);transform-origin:left center;">14-7-2018</span>
<span class="t" style="top:366.01px;line-height:14px;font-size:9.0px;color:#111;left:903.00px;-webkit-text-stroke:0.22px #111;transform:scaleX(0.8495);transform-origin:left center;">Hoofdstuk 2 - paragraaf 3</span>
<span class="t" style="top:376.54px;line-height:14px;font-size:9.0px;color:#111;left:19.60px;-webkit-text-stroke:0.22px #111;transform:scaleX(0.8495);transform-origin:left center;">Archief</span>
<span class="t" style="top:376.54px;line-height:14px;font-size:9.0px;color:#111;left:83.80px;-webkit-text-stroke:0.22px #111;transform:scaleX(0.8428);transform-origin:left center;">192_7_76</span>
<span class="t" style="top:376.54px;line-height:14px;font-size:9.0px;color:#111;left:219.80px;-webkit-text-stroke:0.22px #111;transform:scaleX(0.8428);transform-origin:left center;">192_7_76</span>
<span class="t" style="top:376.54px;line-height:14px;font-size:9.0px;color:#111;left:356.20px;-webkit-text-stroke:0.22px #111;transform:scaleX(0.8428);transform-origin:left center;">192_7_76</span>
<span class="t" style="top:376.54px;line-height:14px;font-size:9.0px;color:#111;right:554.90px;-webkit-text-stroke:0.22px #111;transform:scaleX(0.8233);transform-origin:right center;">1-8-2018</span>
<span class="t" style="top:376.54px;line-height:14px;font-size:9.0px;color:#111;left:473.50px;-webkit-text-stroke:0.22px #111;transform:scaleX(0.8343);transform-origin:left center;">Wel vertaald</span>
<span class="t" style="top:376.54px;line-height:14px;font-size:9.0px;color:#111;left:570.30px;-webkit-text-stroke:0.22px #111;transform:scaleX(0.845);transform-origin:left center;">Politie</span>
<span class="t" style="top:376.54px;line-height:14px;font-size:9.0px;color:#111;left:903.00px;-webkit-text-stroke:0.22px #111;transform:scaleX(0.8495);transform-origin:left center;">Hoofdstuk 2 - paragraaf 2</span>
<span class="t" style="top:387.06px;line-height:14px;font-size:9px;color:#111;font-weight:700;left:19.60px;-webkit-text-stroke:0.22px #111;transform:scaleX(0.9906);transform-origin:left center;">Totaal</span>
<span class="t" style="top:387.06px;line-height:14px;font-size:9px;color:#111;font-weight:700;right:808.60px;-webkit-text-stroke:0.22px #111;transform:scaleX(0.7367);transform-origin:right center;">11</span>
<span class="t" style="top:387.06px;line-height:14px;font-size:9px;color:#111;font-weight:700;right:672.20px;-webkit-text-stroke:0.22px #111;transform:scaleX(0.7367);transform-origin:right center;">11</span>
<span class="t" style="top:387.06px;line-height:14px;font-size:9px;color:#111;font-weight:700;right:125.40px;-webkit-text-stroke:0.22px #111;transform:scaleX(0.8667);transform-origin:right center;">0</span>
<span class="t" style="top:460.73px;line-height:14px;font-size:9.0px;color:#111;left:83.80px;-webkit-text-stroke:0.22px #111;transform:scaleX(0.874);transform-origin:left center;">Tijdbesteding</span>
<span class="t" style="top:471.26px;line-height:14px;font-size:9.0px;color:#111;right:808.60px;-webkit-text-stroke:0.22px #111;transform:scaleX(0.8233);transform-origin:right center;">0,375</span>
<span class="t" style="top:471.26px;line-height:14px;font-size:9.0px;color:#111;right:672.20px;-webkit-text-stroke:0.22px #111;transform:scaleX(0.8942);transform-origin:right center;">2,666666667</span>
<span class="t" style="top:471.26px;line-height:14px;font-size:9.0px;color:#111;left:356.20px;-webkit-text-stroke:0.22px #111;transform:scaleX(0.8667);transform-origin:left center;">1</span>
<span class="t" style="top:471.26px;line-height:14px;font-size:9.0px;color:#111;left:415.80px;-webkit-text-stroke:0.22px #111;transform:scaleX(0.845);transform-origin:left center;">Uren? Of minuten?</span>
<span class="t" style="top:481.79px;line-height:14px;font-size:9.0px;color:#111;right:808.60px;-webkit-text-stroke:0.22px #111;transform:scaleX(0.8233);transform-origin:right center;">27</span>
<span class="t" style="top:481.79px;line-height:14px;font-size:9.0px;color:#111;right:672.20px;-webkit-text-stroke:0.22px #111;transform:scaleX(0.8942);transform-origin:right center;">2,666666667</span>
<span class="t" style="top:481.79px;line-height:14px;font-size:9.0px;color:#111;left:356.20px;-webkit-text-stroke:0.22px #111;transform:scaleX(0.8233);transform-origin:left center;">72</span>
<span class="t" style="top:481.79px;line-height:14px;font-size:9.0px;color:#111;left:415.80px;-webkit-text-stroke:0.22px #111;transform:scaleX(0.845);transform-origin:left center;">(hier moet een link komen)</span>
<div class="r" style="left:566.70px;top:492.85px;width:103.60px;height:12.12px;border:1.6px solid #217346;box-sizing:border-box;"></div>
<div class="r" style="left:667.80px;top:502.47px;width:4.20px;height:4.20px;background:#217346;border:0.7px solid #fff;box-sizing:border-box;"></div>
<div class="r" style="left:1007.60px;top:214.00px;width:16.40px;height:295.00px;background:#e6e6e6;"></div>
<div class="r" style="left:1007.10px;top:224.50px;width:0.90px;height:284.50px;background:#c4c4c4;"></div>
<div class="r" style="left:1010.70px;top:217.00px;width:10.90px;height:9.40px;background:#fff;border:0.8px solid #c8c8c8;box-sizing:border-box;"></div>
<svg class="r" style="left:1012.70px;top:219.20px;" width="7" height="5" viewBox="0 0 7 5"><path d="M0.8 4 L3.5 1 L6.2 4 Z" fill="#606060"/></svg>
<div class="r" style="left:1010.70px;top:226.80px;width:10.90px;height:267.40px;background:#fff;border:0.8px solid #c8c8c8;box-sizing:border-box;"></div>
<div class="r" style="left:1010.50px;top:498.60px;width:11.10px;height:10.40px;background:#fff;border:0.8px solid #c8c8c8;box-sizing:border-box;"></div>
<svg class="r" style="left:1012.60px;top:501.40px;" width="7" height="5" viewBox="0 0 7 5"><path d="M0.8 1 L3.5 4 L6.2 1 Z" fill="#606060"/></svg>
<div class="r" style="left:0.00px;top:509.00px;width:1024.00px;height:20.60px;background:#e6e6e6;"></div>
<div class="r" style="left:0.00px;top:508.60px;width:1008.00px;height:0.90px;background:#c0c0c0;"></div>
<svg class="r" style="left:15.00px;top:514.00px;" width="8" height="9" viewBox="0 0 8 9"><path d="M6 1 L1.6 4.5 L6 8 Z" fill="#c3c3c3"/></svg>
<svg class="r" style="left:37.00px;top:514.00px;" width="8" height="9" viewBox="0 0 8 9"><path d="M2 1 L6.4 4.5 L2 8 Z" fill="#c3c3c3"/></svg>
<div class="r" style="left:72.00px;top:512.00px;width:1.00px;height:14.50px;background:#b4b4b4;"></div>
<span class="t" style="top:511.60px;line-height:14px;font-size:9.8px;color:#555;left:82.00px;transform:scaleX(0.9297);transform-origin:left center;">Blad1</span>
<div class="r" style="left:116.20px;top:509.40px;width:75.20px;height:18.40px;background:#fff;"></div>
<div class="r" style="left:116.20px;top:526.40px;width:75.20px;height:1.60px;background:#217346;"></div>
<span class="t" style="top:511.60px;line-height:14px;font-size:9.8px;color:#217346;font-weight:700;left:125.00px;transform:scaleX(1.0035);transform-origin:left center;">Tabel blad 1</span>
<span class="t" style="top:511.60px;line-height:14px;font-size:9.8px;color:#555;left:200.60px;transform:scaleX(0.9536);transform-origin:left center;">Blad4</span>
<div class="r" style="left:234.80px;top:512.00px;width:1.00px;height:14.50px;background:#b4b4b4;"></div>
<span class="t" style="top:511.60px;line-height:14px;font-size:9.8px;color:#555;left:244.40px;transform:scaleX(0.9536);transform-origin:left center;">Blad2</span>
<div class="r" style="left:278.20px;top:512.00px;width:1.00px;height:14.50px;background:#b4b4b4;"></div>
<span class="t" style="top:511.60px;line-height:14px;font-size:9.8px;color:#555;left:287.80px;transform:scaleX(0.9536);transform-origin:left center;">Blad3</span>
<div class="r" style="left:321.00px;top:512.00px;width:1.00px;height:14.50px;background:#b4b4b4;"></div>
<svg class="r" style="left:346.50px;top:512.50px;" width="13" height="13" viewBox="0 0 13 13"><circle cx="6.3" cy="6.3" r="5.3" fill="none" stroke="#6b6b6b" stroke-width="0.9"/><path d="M6.3 3.4 V9.2 M3.4 6.3 H9.2" stroke="#6b6b6b" stroke-width="0.9"/></svg>
<div class="r" style="left:613.00px;top:515.20px;width:1.00px;height:1.00px;background:#9a9a9a;"></div>
<div class="r" style="left:613.00px;top:518.60px;width:1.00px;height:1.00px;background:#9a9a9a;"></div>
<div class="r" style="left:613.00px;top:522.00px;width:1.00px;height:1.00px;background:#9a9a9a;"></div>
<div class="r" style="left:626.00px;top:514.50px;width:10.00px;height:10.30px;background:#fff;border:0.8px solid #c8c8c8;box-sizing:border-box;"></div>
<svg class="r" style="left:628.20px;top:516.60px;" width="5" height="7" viewBox="0 0 5 7"><path d="M4 0.8 L1 3.5 L4 6.2 Z" fill="#606060"/></svg>
<div class="r" style="left:636.60px;top:514.50px;width:292.20px;height:10.30px;background:#fff;border:0.8px solid #c8c8c8;box-sizing:border-box;"></div>
<div class="r" style="left:928.80px;top:514.50px;width:68.60px;height:10.30px;background:#d9d9d9;"></div>
<div class="r" style="left:997.20px;top:514.50px;width:10.40px;height:10.30px;background:#fff;border:0.8px solid #c8c8c8;box-sizing:border-box;"></div>
<svg class="r" style="left:1000.20px;top:516.60px;" width="5" height="7" viewBox="0 0 5 7"><path d="M1 0.8 L4 3.5 L1 6.2 Z" fill="#606060"/></svg>
<div class="r" style="left:0.00px;top:529.60px;width:1024.00px;height:17.40px;background:#f3f2f1;"></div>
<span class="t" style="top:531.20px;line-height:14px;font-size:8.7px;color:#444;left:3.60px;transform:scaleX(0.9246);transform-origin:left center;">Gereed</span>
<span class="t" style="top:531.20px;line-height:14px;font-size:8.7px;color:#444;left:52.00px;transform:scaleX(1.0024);transform-origin:left center;">Filtermodus</span>
<div class="r" style="left:803.20px;top:529.60px;width:29.70px;height:17.40px;background:#c8c6c4;"></div>
<svg class="r" style="left:812.40px;top:533.00px;" width="10" height="10" viewBox="0 0 10 10"><rect x="0.6" y="0.6" width="8.8" height="8.8" fill="none" stroke="#3b3a39" stroke-width="0.9"/><path d="M3.5 0.6 V9.4 M6.5 0.6 V9.4 M0.6 3.5 H9.4 M0.6 6.5 H9.4" stroke="#3b3a39" stroke-width="0.9"/></svg>
<svg class="r" style="left:843.30px;top:533.00px;" width="10" height="10" viewBox="0 0 10 10"><rect x="0.6" y="0.6" width="8.8" height="8.8" fill="none" stroke="#605e5c" stroke-width="0.9"/><rect x="2.8" y="2.8" width="4.4" height="4.4" fill="none" stroke="#605e5c" stroke-width="0.9"/></svg>
<svg class="r" style="left:873.00px;top:533.00px;" width="10" height="10" viewBox="0 0 10 10"><path d="M0.6 0.6 H9.4 V6 H0.6 Z M0.6 6 V9.4 H9.4" fill="none" stroke="#605e5c" stroke-width="0.9"/><path d="M3.4 0.6 V6" stroke="#605e5c" stroke-width="0.9"/></svg>
<div class="r" style="left:897.60px;top:537.70px;width:5.40px;height:0.90px;background:#605e5c;"></div>
<div class="r" style="left:907.40px;top:537.80px;width:74.20px;height:0.80px;background:#b8b8b8;"></div>
<div class="r" style="left:945.40px;top:536.00px;width:0.80px;height:4.40px;background:#b8b8b8;"></div>
<div class="r" style="left:931.40px;top:534.20px;width:3.60px;height:8.40px;background:#5a5a5a;"></div>
<div class="r" style="left:986.00px;top:537.70px;width:5.60px;height:0.90px;background:#605e5c;"></div>
<div class="r" style="left:988.40px;top:535.30px;width:0.90px;height:5.60px;background:#605e5c;"></div>
<span class="t" style="top:531.20px;line-height:14px;font-size:8.7px;color:#444;left:1002.00px;transform:scaleX(0.8913);transform-origin:left center;">70%</span>
<div class="r" style="left:0.00px;top:546.20px;width:1024.00px;height:0.80px;background:#bdbdbd;"></div>
<div class="r" style="left:0.00px;top:546.10px;width:33.00px;height:0.90px;background:#3a3a3a;"></div>
<div class="r" style="left:292.00px;top:546.10px;width:732.00px;height:0.90px;background:#3a3a3a;"></div>
</body></html>
